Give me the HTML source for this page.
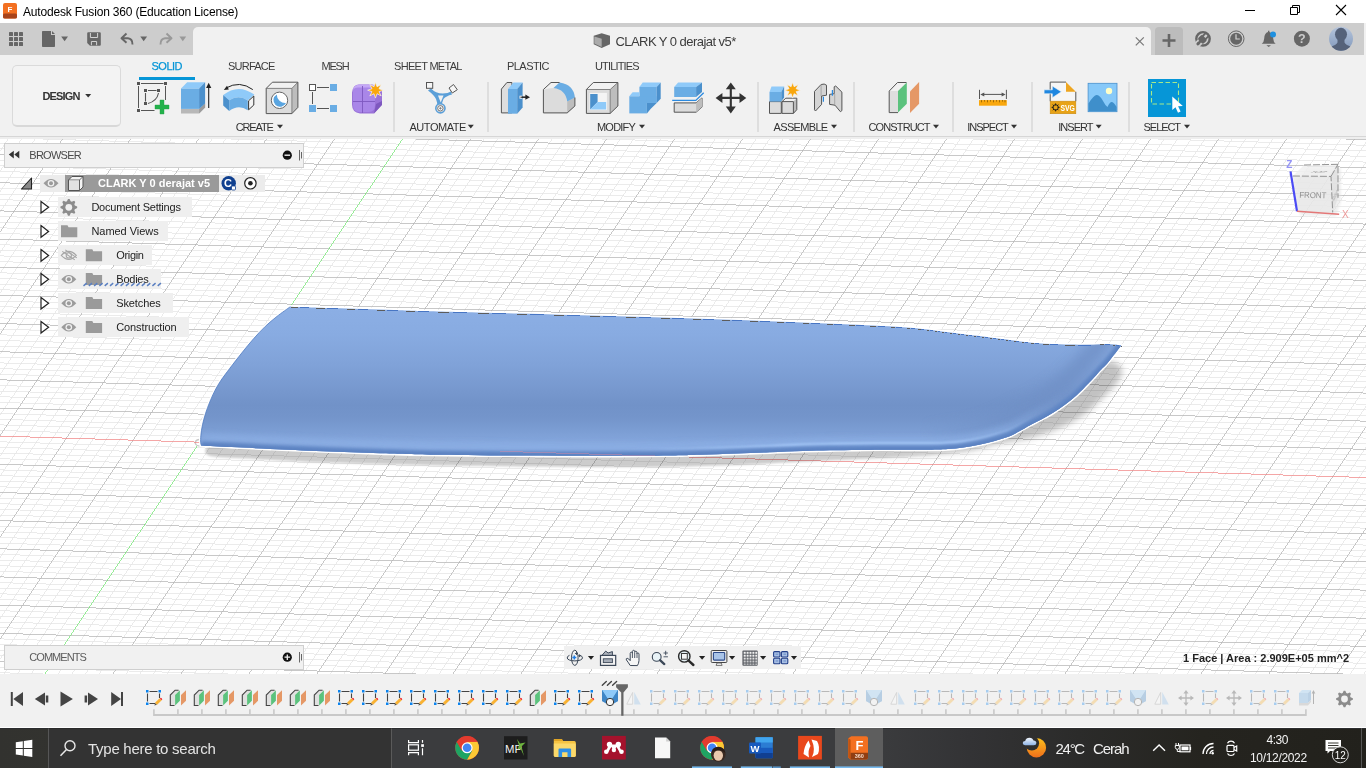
<!DOCTYPE html>
<html lang="en"><head><meta charset="utf-8"><title>Autodesk Fusion 360 (Education License)</title>
<style>
*{box-sizing:border-box;margin:0;padding:0}
html,body{width:1366px;height:768px;overflow:hidden;background:#fff;font-family:"Liberation Sans",sans-serif}
#app{position:relative;width:1366px;height:768px;overflow:hidden;background:#fff}
.t{position:absolute;white-space:nowrap;display:block}
.abs{position:absolute}
svg{position:absolute;overflow:visible}
#titlebar{position:absolute;left:0;top:0;width:1366px;height:23px;background:#fff}
#qat{position:absolute;left:0;top:23px;width:1364px;height:32px;background:#cdcdcd}
#qatr{position:absolute;left:1364px;top:23px;width:2px;height:32px;background:#f1f1f1}
#doctab{position:absolute;left:193px;top:27px;width:958px;height:29px;background:#f1f1f1;border-radius:5px 5px 0 0}
#newtab{position:absolute;left:1155px;top:27px;width:28px;height:28px;background:#bcbcbc;border-radius:4px 4px 0 0}
#ribbon{position:absolute;left:0;top:55px;width:1366px;height:83.5px;background:linear-gradient(#f1f1f1 0,#f1f1f1 80.8px,#d6d6d6 80.8px,#d6d6d6 82px,#eeeeee 82px,#eeeeee 83.5px)}
#design{position:absolute;left:12px;top:65px;width:109px;height:61.5px;border:1px solid #dadada;border-bottom:2px solid #d8d8d8;border-radius:5px;background:#f3f3f3}
.sep{position:absolute;top:82px;width:2px;height:50px;background:#dedede}
#canvas{position:absolute;left:0;top:137px;width:1366px;height:537px;background:#fff;overflow:hidden}
#timeline{position:absolute;left:0;top:674px;width:1366px;height:54px;background:#f1f1f1;border-bottom:1.2px solid #fff}
#taskbar{position:absolute;left:0;top:728px;width:1366px;height:40px;background:linear-gradient(90deg,#32322f 0%,#33332f 4%,#3b3c3e 28%,#3b3c3e 64%,#333335 71%,#2b2b2a 79%,#25241f 88%,#22211c 100%);border-top:1px solid #2c2d2f}

</style></head>
<body>
<div id="app">
<div id="titlebar"></div>
<div id="qat"></div><div id="qatr"></div>
<div id="doctab"></div><div id="newtab"></div>
<div id="ribbon"></div>
<span class="t" style="left:23.0px;top:4.34px;font-size:12px;line-height:17px;letter-spacing:-0.183px;color:#000;">Autodesk Fusion 360 (Education License)</span>
<span class="t" style="left:615.4px;top:32.50px;font-size:13px;line-height:18px;letter-spacing:-0.546px;color:#3c3c3c;">CLARK Y 0 derajat v5*</span>
<span class="t" style="left:151.5px;top:58.69px;font-size:11px;line-height:15px;letter-spacing:-0.502px;color:#0696d7;-webkit-text-stroke:0.25px #0696d7;">SOLID</span>
<span class="t" style="left:228.0px;top:58.69px;font-size:11px;line-height:15px;letter-spacing:-0.780px;color:#3c3c3c;">SURFACE</span>
<span class="t" style="left:321.5px;top:58.69px;font-size:11px;line-height:15px;letter-spacing:-1.196px;color:#3c3c3c;">MESH</span>
<span class="t" style="left:394.0px;top:58.69px;font-size:11px;line-height:15px;letter-spacing:-0.690px;color:#3c3c3c;">SHEET METAL</span>
<span class="t" style="left:507.0px;top:58.69px;font-size:11px;line-height:15px;letter-spacing:-0.550px;color:#3c3c3c;">PLASTIC</span>
<span class="t" style="left:595.0px;top:58.69px;font-size:11px;line-height:15px;letter-spacing:-0.838px;color:#3c3c3c;">UTILITIES</span>
<div class="abs" style="left:139px;top:76.5px;width:56px;height:3px;background:#0696d7"></div>
<div id="design"></div>
<span class="t" style="left:42.5px;top:88.69px;font-size:11px;line-height:15px;letter-spacing:-0.862px;font-weight:bold;color:#333;">DESIGN</span>
<span class="t" style="left:235.7px;top:119.69px;font-size:11px;line-height:15px;letter-spacing:-1.134px;color:#333;">CREATE</span>
<span class="t" style="left:409.5px;top:119.69px;font-size:11px;line-height:15px;letter-spacing:-0.462px;color:#333;">AUTOMATE</span>
<span class="t" style="left:597.0px;top:119.69px;font-size:11px;line-height:15px;letter-spacing:-0.796px;color:#333;">MODIFY</span>
<span class="t" style="left:773.6px;top:119.69px;font-size:11px;line-height:15px;letter-spacing:-0.676px;color:#333;">ASSEMBLE</span>
<span class="t" style="left:868.5px;top:119.69px;font-size:11px;line-height:15px;letter-spacing:-0.872px;color:#333;">CONSTRUCT</span>
<span class="t" style="left:967.3px;top:119.69px;font-size:11px;line-height:15px;letter-spacing:-1.025px;color:#333;">INSPECT</span>
<span class="t" style="left:1058.2px;top:119.69px;font-size:11px;line-height:15px;letter-spacing:-0.957px;color:#333;">INSERT</span>
<span class="t" style="left:1143.6px;top:119.69px;font-size:11px;line-height:15px;letter-spacing:-1.066px;color:#333;">SELECT</span>
<div class="sep" style="left:393px"></div>
<div class="sep" style="left:487px"></div>
<div class="sep" style="left:757px"></div>
<div class="sep" style="left:853px"></div>
<div class="sep" style="left:952px"></div>
<div class="sep" style="left:1031px"></div>
<div class="sep" style="left:1128px"></div>
<svg width="1366" height="137" viewBox="0 0 1366 137" style="left:0;top:0">
<path d="M85.2 93.9h6l-3 3.6z" fill="#333"/>
<path d="M277.0 124.8h6l-3 3.6z" fill="#333"/>
<path d="M467.8 124.8h6l-3 3.6z" fill="#333"/>
<path d="M639.0 124.8h6l-3 3.6z" fill="#333"/>
<path d="M831.0 124.8h6l-3 3.6z" fill="#333"/>
<path d="M933.0 124.8h6l-3 3.6z" fill="#333"/>
<path d="M1011.0 124.8h6l-3 3.6z" fill="#333"/>
<path d="M1095.7 124.8h6l-3 3.6z" fill="#333"/>
<path d="M1184.0 124.8h6l-3 3.6z" fill="#333"/>
<!-- app icon -->
<g transform="translate(3,3)">
 <rect x="0" y="0" width="14" height="15.500" rx="2" fill="#f37021"/>
 <rect x="0" y="10.500" width="14" height="5" rx="1.500" fill="#a8431a"/>
 <text x="7" y="8.500" font-family="Liberation Sans, sans-serif" font-weight="bold" font-size="8" fill="#fff" text-anchor="middle">F</text>
</g>
<!-- window controls -->
<path d="M1245 10.5h10" stroke="#000" stroke-width="1" fill="none"/>
<path d="M1290.5 7.5h7v7h-7z M1292.500 7.500v-2h7v7h-2" stroke="#000" stroke-width="1" fill="none"/>
<path d="M1336 5l10 10M1346 5l-10 10" stroke="#000" stroke-width="1.1" fill="none"/>
<!-- QAT icons -->
<g fill="#666">
 <g id="gridic">
  <rect x="9" y="32" width="4" height="4" rx=".6"/><rect x="14" y="32" width="4" height="4" rx=".6"/><rect x="19" y="32" width="4" height="4" rx=".6"/>
  <rect x="9" y="37" width="4" height="4" rx=".6"/><rect x="14" y="37" width="4" height="4" rx=".6"/><rect x="19" y="37" width="4" height="4" rx=".6"/>
  <rect x="9" y="42" width="4" height="4" rx=".6"/><rect x="14" y="42" width="4" height="4" rx=".6"/><rect x="19" y="42" width="4" height="4" rx=".6"/>
 </g>
 <path d="M43 31h8v4h4v11.200q0 .8 -.8 .8h-11.400q-.8 0 -.8 -.8v-14.400q0 -.8 .8 -.8z M52 31l3 3h-3z"/>
 <path d="M61.200 36.500h6.800l-3.400 4.800z"/>
 <path d="M88.200 32.200h11.600q1 0 1 1v11.600q0 1 -1 1h-9.800l-2.800 -2.800v-9.800q0 -1 1 -1z"/>
 <path d="M90.400 33v4.500h7.200v-4.500M91.400 45.200v-3.700h5.200v3.700" stroke="#d2d2d2" fill="none" stroke-width="1"/>
 <path d="M140.300 36.500h6.800l-3.400 4.800z"/>
</g>
<path d="M126.500 33.500l-5 4.800l5 4.500 M121.500 38.300h6.500q4.500 .4 4.500 6.200" stroke="#666" stroke-width="1.9" fill="none" stroke-linejoin="round"/>
<path d="M166.500 33.500l5 4.800l-5 4.500 M171.500 38.300h-6.500q-4.500 .4 -4.500 6.200" stroke="#999" stroke-width="1.9" fill="none" stroke-linejoin="round"/>
<path d="M179.400 36.500h6.800l-3.400 4.800z" fill="#999"/>
<!-- doc tab icon + close -->
<g transform="translate(593.700,33.200)">
 <path d="M0 2.500l8 -2.500l8.300 2.500v8.500l-8.300 3.800l-8 -3.800z" fill="#666"/>
 <path d="M0.600 3.200l7.400 2.300v8.300l-7.400 -3.400z" fill="#aaa"/>
</g>
<path d="M1135.800 37.300l8 8M1143.800 37.300l-8 8" stroke="#777" stroke-width="1.2"/>
<path d="M1162.500 40.500h13M1169 34v13" stroke="#666" stroke-width="2.600"/>
<!-- right QAT icons -->
<g>
 <circle cx="1203" cy="38.800" r="6.700" fill="none" stroke="#666" stroke-width="2.400"/>
 <g transform="translate(1203,38.800) rotate(45)">
  <path d="M-2.300 4.500v6.500M2.300 4.500v6.500" stroke="#cdcdcd" stroke-width="1.700" fill="none"/>
  <rect x="-3.900" y="-2.300" width="7.800" height="6.300" rx="1.800" fill="#666"/>
  <rect x="-3" y="-6.500" width="1.800" height="5" fill="#666"/><rect x="1.200" y="-6.500" width="1.800" height="5" fill="#666"/>
  <rect x="-1.200" y="3" width="2.400" height="5.500" fill="#666"/>
 </g>
 <circle cx="1236.200" cy="38.700" r="7.800" fill="none" stroke="#666" stroke-width="1"/>
 <circle cx="1236.200" cy="38.700" r="6" fill="#666"/>
 <path d="M1236 34.300v4.700h3.800" stroke="#d4d4d4" stroke-width="1.200" fill="none"/>
 <path d="M1268 30.800h1.400v1.200q3.600 1 3.800 6.500q.2 3.500 2.400 5.300h-13.800q2.200 -1.800 2.400 -5.300q.2 -5.500 3.800 -6.500z M1266.400 45.300h4.600l-2.300 1.700z" fill="#666"/>
 <circle cx="1273" cy="34.600" r="3" fill="#1e90e0"/>
 <circle cx="1301.900" cy="38.700" r="8" fill="#666"/>
 <text x="1301.900" y="43.300" font-family="Liberation Sans, sans-serif" font-weight="bold" font-size="12.500" fill="#cdcdcd" text-anchor="middle">?</text>
 <defs><linearGradient id="avg" x1="0" y1="0" x2="0" y2="1"><stop offset="0" stop-color="#b6c5dc"/><stop offset="1" stop-color="#8198bb"/></linearGradient>
 <clipPath id="avc"><circle cx="1341" cy="38.700" r="12"/></clipPath></defs>
 <circle cx="1341" cy="38.700" r="12" fill="url(#avg)"/>
 <g clip-path="url(#avc)" fill="#55627a"><ellipse cx="1341" cy="34.300" rx="6" ry="6.500"/><path d="M1337.500 38h7v4.500q1 2.500 8 4.500v6h-23v-6q7 -2 8 -4.500z"/></g>
</g>

<!-- CREATE: sketch -->
<g stroke="#555" stroke-width="1" fill="none">
 <path d="M141 83.500h22.500M138.500 86v22M165.500 86v14M141 110.500h13.500"/>
 <path d="M148 90.500h8.500M145.500 93v8.500M158.500 93q-1.500 8 -10.500 10.500" stroke-width="1.100"/>
</g>
<g fill="#555">
 <rect x="137" y="82" width="3" height="3"/><rect x="164" y="82" width="3" height="3"/><rect x="137" y="109" width="3" height="3"/>
 <rect x="144" y="89" width="3" height="3"/><rect x="157" y="89" width="3" height="3"/><rect x="144" y="102" width="3" height="3"/>
</g>
<path d="M160 100h4v5h5v4h-5v5h-4v-5h-5v-4h5z" fill="#23b24b" stroke="#1f9c43" stroke-width=".4"/>
<!-- CREATE: extrude -->
<path d="M181 108.900h18.100l6 -5.300v3.800l-6 6.200h-18.100z" fill="#b8b8b8"/>
<path d="M199.100 108.900l6 -5.300v3.800l-6 6.200z" fill="#9c9c9c"/>
<path d="M181 88.400h18.100v20.500h-18.100z" fill="#6aade4"/>
<path d="M181 88.400l6.200 -6.200h17.900l-6 6.200z" fill="#8fcaf9"/>
<path d="M199.100 88.400l6 -6.200v21.400l-6 5.300z" fill="#4b90cc"/>
<path d="M208.700 108v-22" stroke="#222" stroke-width="1.100"/><path d="M208.700 82.800l2.600 5.200h-5.200z" fill="#222"/>
<!-- CREATE: revolve -->
<path d="M252.800 89.600q-13 -9.500 -27 -1.500" stroke="#222" stroke-width="1" fill="none"/>
<path d="M223.800 90l3.200 -4.200l1.800 3.600z" fill="#222"/>
<path d="M223.200 95q15 -12 31.200 -.4l-6.600 6q-9 -6.500 -18.600 -.3z" fill="#8fcaf9"/>
<path d="M229.200 100.300q9.600 -6.200 18.600 .3v9.700q-9 -6.500 -18.600 .6z" fill="#6aade4"/>
<path d="M223.200 95l6 5.300v10.600l-6 -5.500z" fill="#4b90cc"/>
<path d="M248.600 100.800l5.200 -4.800v9l-5.200 4.800z" fill="#f4f4f4" stroke="#333" stroke-width="1"/>
<!-- CREATE: hole -->
<path d="M266.200 88.400l6.200 -6.200h25.500l-6 6.200z" fill="#f1f1f1"/>
<path d="M291.900 88.400l6 -6.200v25.200l-6 6.200z" fill="#bdbdbd"/>
<path d="M266.200 88.400h25.700v25.200h-25.700z" fill="#dcdcdc"/>
<path d="M266.200 88.400h25.700v25.200 M291.900 88.400l6 -6.200" fill="none" stroke="#777" stroke-width=".9"/><path d="M266.200 88.400l6.200 -6.200h25.500v25.200l-6 6.200h-25.700z" fill="none" stroke="#555" stroke-width="1"/>
<circle cx="279.500" cy="100.300" r="8.200" fill="#fff" stroke="#666" stroke-width="1"/>
<path d="M276.800 94.400a6.600 6.600 0 1 0 9.200 8.600a8.500 8.500 0 0 1 -9.200 -8.600z" fill="#5aa5e0"/>
<!-- CREATE: pattern -->
<path d="M317 87.500h12M312.500 92v12M317 108.500h12" stroke="#555" stroke-width="1" fill="none"/>
<rect x="309.500" y="84.500" width="6" height="6" fill="#fff" stroke="#555" stroke-width="1"/>
<rect x="330" y="84" width="7" height="7" fill="#6aade4"/><rect x="309" y="105" width="7" height="7" fill="#6aade4"/><rect x="330" y="105" width="7" height="7" fill="#6aade4"/>
<!-- CREATE: form -->
<path d="M359 84.500h12q5 0 5 4l6 2v14l-8 9h-14q-8 -1 -8 -9v-12q1 -8 7 -8z" fill="#9a73d8"/>
<path d="M353 92q0 -6 6 -6h11q5 0 5 5v14q0 7 -6 7h-10q-6 0 -6 -7z" fill="#a986e8"/>
<path d="M359 84.500h12q4 0 5 3l-3 2q-1 -2 -4 -2h-11q-4 0 -5 3q0 -5 6 -6z" fill="#c5a8f6"/>
<path d="M376 104l6 -3v4l-8 8.500z" fill="#7e58bf"/>
<path d="M362.500 86v27M353 101.500h22" stroke="#7e58bf" stroke-width=".9" fill="none"/>
<path d="M375.500 82.300l1.500 4.400l4.200 -2.200l-2.200 4.200l4.400 1.500l-4.400 1.500l2.200 4.200l-4.200 -2.200l-1.500 4.400l-1.500 -4.400l-4.200 2.200l2.200 -4.200l-4.400 -1.500l4.400 -1.500l-2.200 -4.200l4.200 2.200z" fill="#f9a70d" stroke="#f4f4f4" stroke-width=".7"/>
<!-- AUTOMATE -->
<path d="M431 88.500q6 6.500 16.500 4.500l3.500 -1.500l1 3q-6 1.500 -8.500 4.500q-2 3.500 -1 7l-5.500 .5q.8 -3.500 -1 -7.500q-2 -4 -8 -8.500z" fill="#5b9fd8"/>
<path d="M438 95.500h5.500l-2.800 7z" fill="#f1f1f1"/>
<rect x="426.500" y="82.500" width="6.200" height="5.800" fill="#f6f6f6" stroke="#555" stroke-width="1"/>
<path d="M449 88l4.500 -3.500l3.800 5.200l-5 3.300z" fill="#f6f6f6" stroke="#555" stroke-width="1"/>
<circle cx="440.400" cy="108.300" r="4.600" fill="#e6e6e6" stroke="#5b9fd8" stroke-width="1.600"/>
<circle cx="440.400" cy="108.300" r="2.700" fill="#fff" stroke="#666" stroke-width=".9"/>
<path d="M439 108.300h2.800M440.400 106.900v2.800" stroke="#666" stroke-width=".7"/>
<!-- MODIFY: press pull -->
<path d="M501.400 89.100l5.500 -6.600h5v30.400h-10.500z" fill="#dedede" stroke="#555" stroke-width="1"/>
<path d="M508 89h9.200v24.700h-9.200z" fill="#6aade4"/>
<path d="M508 89l5.400 -6.500h9.200l-5.400 6.500z" fill="#8fcaf9"/>
<path d="M517.200 89l5.400 -6.500v25l-5.400 6.200z" fill="#4b90cc"/>
<path d="M520 97.200h6" stroke="#222" stroke-width="1.100"/><path d="M530 97.200l-4.600 -2.600v5.200z" fill="#222"/>
<rect x="519.500" y="95.700" width="2.500" height="3" fill="#f1f1f1"/><path d="M520.500 97.200h6" stroke="#222" stroke-width="1.100"/>
<!-- MODIFY: fillet -->
<path d="M543.400 112.900v-23.400l7.600 -7h8.500q14 2 15.400 15v8.500l-7.700 6.900z" fill="#dcdcdc"/>
<path d="M567.200 112.900v-11.500l7.700 -4v8.600z" fill="#bdbdbd"/>
<path d="M543.400 89.500l7.600 -7h8.500l-6 5.500q-5 0 -10.100 1.500z" fill="#f1f1f1"/>
<path d="M559.500 82.500q14 2 15.400 15l-7.700 4q-1.500 -12 -13.700 -13.500z" fill="#6aade4"/>
<path d="M543.400 112.900v-23.400l7.600 -7h8.500 M574.900 97.500v8.500l-7.700 6.900h-23.800" fill="none" stroke="#555" stroke-width="1"/>
<!-- MODIFY: shell -->
<path d="M586.400 89.500l6.900 -7h24.600l-7.700 7z" fill="#f1f1f1"/>
<path d="M610.200 89.500l7.700 -7v23.500l-7.700 7.400z" fill="#bdbdbd"/>
<path d="M586.400 89.500h23.800v23.900h-23.800z" fill="#dcdcdc"/>
<path d="M586.400 89.500h23.800v23.900 M610.200 89.500l7.700 -7" fill="none" stroke="#777" stroke-width=".9"/><path d="M586.400 89.500l6.900 -7h24.600v23.500l-7.700 7.400h-23.800z" fill="none" stroke="#555" stroke-width="1"/>
<rect x="589.500" y="92.900" width="17.400" height="17.200" fill="#f4f4f4"/>
<path d="M590.200 94.100h7.400v8l-7.400 7.400z" fill="#4b90cc"/>
<path d="M597.600 102.100h8.500v7.400h-15.900z" fill="#8fcaf9"/>
<!-- MODIFY: combine -->
<path d="M639.400 86.900h17.300v16h-17.300z" fill="#6aade4"/>
<path d="M639.400 86.900l3.300 -4.500h18l-4 4.500z" fill="#8fcaf9"/>
<path d="M656.700 86.900l4 -4.500v16.300l-4 4.200z" fill="#4b90cc"/>
<path d="M629.300 96.200h17.600v17.200h-17.600z" fill="#6aade4"/>
<path d="M629.300 96.200l3.300 -3.900h6.800v3.900z" fill="#8fcaf9"/>
<path d="M646.900 102.900h9.800l-5.900 5.900l-3.900 4.600z" fill="#4b90cc"/>
<path d="M646.900 96.200h9.800v6.700h-9.800z" fill="#6aade4"/>
<!-- MODIFY: split -->
<path d="M674.200 102.900h21.900l5.900 -5v9.200l-5.900 5.100h-21.900z" fill="#dcdcdc" stroke="#555" stroke-width="1"/>
<path d="M696.100 102.900l5.900 -5v9.200l-5.900 5.100z" fill="#bdbdbd"/>
<path d="M674.200 86.900h21.900v10.100h-21.900z" fill="#6aade4"/>
<path d="M674.200 86.900l3.900 -4.500h23.900l-5.900 4.500z" fill="#8fcaf9"/>
<path d="M696.100 86.900l5.900 -4.500v9.600l-5.900 5z" fill="#4b90cc"/>
<path d="M672.200 100.400h23.600l7.900 -7.600" fill="none" stroke="#2b8ae0" stroke-width="1.300"/>
<!-- MODIFY: move -->
<path d="M730.800 87v22M720 97.900h22" stroke="#333" stroke-width="2.100"/>
<path d="M730.800 82.400l5 6.800h-10z M730.800 113.400l5 -6.800h-10z M715.600 97.900l6.800 -5v10z M746.300 97.900l-6.800 -5v10z" fill="#333"/>
<!-- ASSEMBLE: new component -->
<path d="M769.500 101.600h11.800v11.800h-11.800z" fill="#dcdcdc" stroke="#555" stroke-width="1"/>
<path d="M782 101.600h11.400v11.800h-11.400z" fill="#dcdcdc"/>
<path d="M782 101.600l3.800 -3.400h11l-3.400 3.400z" fill="#f1f1f1"/>
<path d="M793.400 101.600l3.400 -3.400v11.500l-3.400 3.700z" fill="#bdbdbd"/>
<path d="M782 101.600l3.800 -3.400h11v11.500l-3.400 3.700h-11.400z M782 101.600h11.400v11.800" fill="none" stroke="#555" stroke-width="1"/>
<path d="M769.500 92h11.800v9.600h-11.800z" fill="#6aade4"/>
<path d="M769.500 92l2 -5.600h12.600l-2.800 5.600z" fill="#8fcaf9"/>
<path d="M781.300 92l2.800 -5.600v11l-2.800 4.200z" fill="#4b90cc"/>
<path d="M792.600 82.300l1.500 4.400l4.200 -2.200l-2.200 4.200l4.400 1.500l-4.400 1.500l2.200 4.200l-4.200 -2.200l-1.500 4.400l-1.500 -4.400l-4.200 2.200l2.200 -4.200l-4.400 -1.500l4.400 -1.500l-2.200 -4.200l4.200 2.200z" fill="#f9a70d" stroke="#f4f4f4" stroke-width=".7"/>
<!-- ASSEMBLE: joint -->
<path d="M814.500 91.400l6.600 -6.900q3.500 -1.200 5.400 .7v10l-4.900 .8v8.400l-6.100 6.600l-1 -1.200z" fill="#d4d4d4" stroke="#555" stroke-width="1" stroke-linejoin="round"/>
<path d="M821.100 84.500v11.500" stroke="#9a9a9a" stroke-width=".8"/>
<path d="M834.200 86.800l1.500 -.8l6.200 6.100v18.500l-1.500 1.100l-5.400 -6.500l-5.400 -.8v-10l4.600 -.7z" fill="#d4d4d4" stroke="#555" stroke-width="1" stroke-linejoin="round"/>
<path d="M834.700 94v11" stroke="#9a9a9a" stroke-width=".8"/>
<path d="M823.400 96.800v5M832.400 90.100v5.600" stroke="#2b8ae0" stroke-width="1.200"/>
<!-- CONSTRUCT -->
<path d="M889.200 112.600v-21.500l8.300 -8.600h9l-8.500 8.600v21.500z" fill="#dedede"/>
<path d="M889.200 91.100l8.300 -8.600h9l-8.500 8.600z" fill="#f1f1f1"/>
<path d="M898 112.600h-8.800v-21.500l8.300 -8.600h9" fill="none" stroke="#555" stroke-width="1"/>
<path d="M898 91.100l8.800 -8.600v21.200l-8.800 8.900z" fill="#5bc27d"/>
<path d="M910 91.400l9.100 -9.300v21.600l-9.100 9.200z" fill="#e59866"/>
<!-- INSPECT -->
<rect x="979" y="100.100" width="27.800" height="5.600" fill="#f9a70d"/>
<path d="M981.500 100.100v2.200M984.500 100.100v1.500M987.500 100.100v2.200M990.500 100.100v1.500M993.500 100.100v2.200M996.500 100.100v1.500M999.500 100.100v2.200M1002.500 100.100v1.500M1005 100.100v2.200" stroke="#8a5a00" stroke-width=".8"/>
<path d="M979.500 89.800v9.200M1006.400 89.800v9.200M982 94.400h22" stroke="#555" stroke-width="1"/>
<path d="M980.300 94.400l4 -2v4z M1005.600 94.400l-4 -2v4z" fill="#555"/>
<!-- INSERT: svg -->
<path d="M1050.200 101.200v-19.100h15.800l9.800 9.700v9.400z" fill="#f6f6f6"/>
<path d="M1050.200 101.200v-19.100h15.800 M1075.800 91.800v9.400" fill="none" stroke="#555" stroke-width="1"/>
<path d="M1066 82.100l9.800 9.700h-9.800z" fill="#eea621"/>
<path d="M1044.100 89.800h8.200v-3.800l9.100 5.800l-9.100 5.900v-3.900h-8.200z" fill="#1f87e0" stroke="#f6f6f6" stroke-width=".6"/>
<rect x="1050.200" y="101.200" width="25.600" height="12.500" fill="#e8a317" stroke="#c98a10" stroke-width=".6"/>
<circle cx="1055.600" cy="107.400" r="2.700" fill="none" stroke="#1a1a1a" stroke-width="1"/>
<path d="M1055.600 103.400v8M1051.600 107.400h8M1052.800 104.600l5.600 5.600M1058.400 104.600l-5.600 5.600" stroke="#1a1a1a" stroke-width=".9"/>
<circle cx="1055.600" cy="107.400" r="1.900" fill="#e8a317"/>
<text x="1067.700" y="110.600" font-family="Liberation Sans, sans-serif" font-weight="bold" font-size="8.500" fill="#fff" text-anchor="middle" textLength="14.500" lengthAdjust="spacingAndGlyphs">SVG</text>
<!-- INSERT: image -->
<rect x="1088.100" y="83.300" width="28.900" height="28.400" fill="#87c9f9" stroke="#4b90cc" stroke-width=".8"/>
<path d="M1088.500 103.500Q1094 94.500 1097 95Q1100 95.500 1103 101Q1105 105 1107.500 107Q1110 101.500 1112 102Q1114 102.500 1116.600 107L1116.600 111.300L1088.500 111.300Z" fill="#3f8fcb"/>
<circle cx="1109" cy="91" r="3.200" fill="#ffffc8"/>
<!-- SELECT -->
<rect x="1148" y="79" width="38" height="38" fill="#0696d7"/>
<rect x="1151.500" y="82.500" width="27" height="21.500" fill="none" stroke="#a6e98a" stroke-width="1.100" stroke-dasharray="4.500 2.500"/>
<path d="M1172.300 96.500v13.500l3.200 -2.800l2.500 5.500l2.600 -1.200l-2.500 -5.300l4.700 -.1z" fill="#fff"/>

</svg>
<div id="canvas">
<svg width="1366" height="537" viewBox="0 137 1366 537" style="left:0;top:0">
<defs>
<linearGradient id="bodyg" gradientUnits="userSpaceOnUse" x1="0" y1="306" x2="0" y2="456">
<stop offset="0.000" stop-color="#8cafe5"/>
<stop offset="0.193" stop-color="#88abe1"/>
<stop offset="0.393" stop-color="#80a2d8"/>
<stop offset="0.560" stop-color="#7798ce"/>
<stop offset="0.660" stop-color="#7192c8"/>
<stop offset="0.747" stop-color="#7495cb"/>
<stop offset="0.827" stop-color="#7b9dd3"/>
<stop offset="0.907" stop-color="#84a6dc"/>
<stop offset="1.000" stop-color="#89ace2"/>
</linearGradient>
<clipPath id="bodyc"><path d="M290.3 306.7C298.6 307.0 321.7 307.7 340.0 308.3C358.3 308.9 385.0 309.8 400.0 310.3C415.0 310.8 410.0 310.8 430.0 311.3C450.0 311.9 491.7 312.9 520.0 313.6C548.3 314.4 575.0 315.1 600.0 315.8C625.0 316.5 648.3 317.1 670.0 317.8C691.7 318.5 710.1 319.1 730.0 319.8C749.9 320.5 769.5 321.2 789.5 322.0C809.5 322.8 829.9 323.6 850.0 324.6C870.1 325.6 892.6 326.4 910.0 327.8C927.4 329.2 939.5 331.3 954.3 333.1C969.1 334.9 986.8 337.1 998.6 338.6C1010.4 340.1 1016.1 341.0 1025.0 341.9C1033.8 342.8 1041.4 343.6 1051.7 344.1C1062.0 344.6 1077.5 344.8 1087.0 344.8C1096.5 344.8 1103.3 344.2 1109.0 344.3C1114.7 344.4 1119.2 345.3 1121.3 345.5C1119.2 348.2 1111.8 357.8 1108.4 361.9C1105.0 366.0 1103.0 367.5 1100.7 370.0C1098.4 372.5 1096.7 374.6 1094.7 376.8C1092.7 379.0 1091.6 380.3 1088.6 383.3C1085.6 386.3 1080.8 391.5 1076.9 395.0C1073.0 398.5 1069.1 401.5 1065.2 404.4C1061.3 407.3 1057.3 410.1 1053.4 412.6C1049.5 415.1 1045.6 417.1 1041.7 419.2C1037.8 421.3 1033.5 423.3 1030.0 425.2C1026.5 427.1 1024.0 428.6 1020.7 430.4C1017.4 432.2 1014.6 434.1 1010.3 435.9C1006.0 437.6 999.9 439.4 994.7 440.9C989.5 442.4 984.3 443.7 979.1 444.8C973.9 445.9 968.6 446.9 963.4 447.6C958.2 448.3 953.0 448.8 947.8 449.1C942.6 449.5 940.0 449.6 932.0 449.7C924.0 449.8 912.0 449.7 900.0 449.7C888.0 449.7 871.7 449.8 860.0 449.9C848.3 450.0 839.5 450.1 830.0 450.3C820.5 450.5 812.8 450.7 802.8 451.0C792.8 451.3 781.1 451.9 770.0 452.3C758.9 452.7 748.1 453.2 736.4 453.6C724.7 454.0 711.1 454.5 700.0 454.8C688.9 455.1 686.7 455.3 670.0 455.5C653.3 455.7 625.0 455.8 600.0 455.8C575.0 455.8 548.3 455.8 520.0 455.6C491.7 455.4 453.3 455.1 430.0 454.7C406.7 454.3 397.9 453.9 380.0 453.3C362.1 452.7 341.1 451.9 322.8 451.2C304.5 450.5 285.2 449.5 270.0 448.9C254.8 448.2 243.1 447.6 231.7 447.1C220.3 446.6 206.5 445.9 201.5 445.7C201.4 445.2 200.8 444.2 200.7 442.5C200.6 440.8 200.6 438.1 200.9 435.2C201.2 432.2 201.7 428.4 202.5 424.8C203.3 421.2 204.4 417.1 205.6 413.3C206.8 409.5 208.2 405.7 209.8 401.9C211.4 398.1 213.1 394.0 215.0 390.4C216.9 386.8 218.8 383.6 221.2 380.0C223.7 376.4 226.2 373.1 229.6 368.6C233.0 364.1 237.9 357.8 241.9 352.8C245.9 347.8 249.7 343.1 253.6 338.7C257.5 334.3 261.4 330.1 265.3 326.4C269.2 322.7 272.8 319.7 277.0 316.4C281.2 313.1 288.1 308.3 290.3 306.7Z"/></clipPath>
<filter id="b1" x="-10%" y="-30%" width="120%" height="160%"><feGaussianBlur stdDeviation="1.300"/></filter>
<filter id="b6" x="-10%" y="-30%" width="120%" height="160%"><feGaussianBlur stdDeviation="6"/></filter>
<filter id="b3" x="-10%" y="-30%" width="120%" height="160%"><feGaussianBlur stdDeviation="3"/></filter>
<linearGradient id="fadeR" gradientUnits="userSpaceOnUse" x1="840" y1="0" x2="990" y2="0"><stop offset="0" stop-color="#000"/><stop offset="1" stop-color="#fff"/></linearGradient>
<linearGradient id="fadeL" gradientUnits="userSpaceOnUse" x1="880" y1="0" x2="1010" y2="0"><stop offset="0" stop-color="#fff"/><stop offset="1" stop-color="#000"/></linearGradient>
<linearGradient id="fadeL2" gradientUnits="userSpaceOnUse" x1="990" y1="0" x2="1070" y2="0"><stop offset="0" stop-color="#fff"/><stop offset="1" stop-color="#000"/></linearGradient>
<mask id="mL2" maskUnits="userSpaceOnUse" x="0" y="137" width="1366" height="537"><rect x="0" y="137" width="1366" height="537" fill="url(#fadeL2)"/></mask>
<linearGradient id="fadeH" gradientUnits="userSpaceOnUse" x1="620" y1="0" x2="1040" y2="0"><stop offset="0" stop-color="#000"/><stop offset=".4" stop-color="#fff"/><stop offset=".8" stop-color="#fff"/><stop offset="1" stop-color="#000"/></linearGradient>
<mask id="mH" maskUnits="userSpaceOnUse" x="0" y="137" width="1366" height="537"><rect x="0" y="137" width="1366" height="537" fill="url(#fadeH)"/></mask>
<linearGradient id="fadeR2" gradientUnits="userSpaceOnUse" x1="920" y1="0" x2="1040" y2="0"><stop offset="0" stop-color="#000"/><stop offset="1" stop-color="#fff"/></linearGradient>
<mask id="mR2" maskUnits="userSpaceOnUse" x="0" y="137" width="1366" height="537"><rect x="0" y="137" width="1366" height="537" fill="url(#fadeR2)"/></mask>
<filter id="b08" x="-10%" y="-30%" width="120%" height="160%"><feGaussianBlur stdDeviation=".800"/></filter>
<filter id="b15" x="-10%" y="-30%" width="120%" height="160%"><feGaussianBlur stdDeviation="1.600"/></filter>
<mask id="mR" maskUnits="userSpaceOnUse" x="0" y="137" width="1366" height="537"><rect x="0" y="137" width="1366" height="537" fill="url(#fadeR)"/></mask>
<mask id="mL" maskUnits="userSpaceOnUse" x="0" y="137" width="1366" height="537"><rect x="0" y="137" width="1366" height="537" fill="url(#fadeL)"/></mask>
<filter id="b4" x="-10%" y="-30%" width="120%" height="160%"><feGaussianBlur stdDeviation="3.200"/></filter>
</defs>

<!-- origin marker --><path d="M199.500 439.400a4.200 3.300 0 1 0 0 6.600" fill="none" stroke="#c8c8c8" stroke-width="1.500"/>
<g shape-rendering="crispEdges" fill="none" stroke-width=".700">
<path stroke="#e3e3e3" d="M9.4 137L-349.7 674M23.0 137L-336.1 674M36.6 137L-322.5 674M50.2 137L-308.9 674M77.4 137L-281.7 674M91.0 137L-268.1 674M104.6 137L-254.5 674M118.2 137L-240.9 674M145.4 137L-213.7 674M159.0 137L-200.1 674M172.6 137L-186.5 674M186.2 137L-172.9 674M213.4 137L-145.7 674M227.0 137L-132.1 674M240.6 137L-118.5 674M254.2 137L-104.9 674M281.4 137L-77.7 674M295.0 137L-64.1 674M308.6 137L-50.5 674M322.2 137L-36.9 674M349.4 137L-9.7 674M363.0 137L3.9 674M376.6 137L17.5 674M390.2 137L31.1 674M417.4 137L58.3 674M431.0 137L71.9 674M444.6 137L85.5 674M458.2 137L99.1 674M485.4 137L126.3 674M499.0 137L139.9 674M512.6 137L153.5 674M526.2 137L167.1 674M553.4 137L194.3 674M567.0 137L207.9 674M580.6 137L221.5 674M594.2 137L235.1 674M621.4 137L262.3 674M635.0 137L275.9 674M648.6 137L289.5 674M662.2 137L303.1 674M689.4 137L330.3 674M703.0 137L343.9 674M716.6 137L357.5 674M730.2 137L371.1 674M757.4 137L398.3 674M771.0 137L411.9 674M784.6 137L425.5 674M798.2 137L439.1 674M825.4 137L466.3 674M839.0 137L479.9 674M852.6 137L493.5 674M866.2 137L507.1 674M893.4 137L534.3 674M907.0 137L547.9 674M920.6 137L561.5 674M934.2 137L575.1 674M961.4 137L602.3 674M975.0 137L615.9 674M988.6 137L629.5 674M1002.2 137L643.1 674M1029.4 137L670.3 674M1043.0 137L683.9 674M1056.6 137L697.5 674M1070.2 137L711.1 674M1097.4 137L738.3 674M1111.0 137L751.9 674M1124.6 137L765.5 674M1138.2 137L779.1 674M1165.4 137L806.3 674M1179.0 137L819.9 674M1192.6 137L833.5 674M1206.2 137L847.1 674M1233.4 137L874.3 674M1247.0 137L887.9 674M1260.6 137L901.5 674M1274.2 137L915.1 674M1301.4 137L942.3 674M1315.0 137L955.9 674M1328.6 137L969.5 674M1342.2 137L983.1 674M1369.4 137L1010.3 674M1383.0 137L1023.9 674M1396.6 137L1037.5 674M1410.2 137L1051.1 674M1437.4 137L1078.3 674M1451.0 137L1091.9 674M1464.6 137L1105.5 674M1478.2 137L1119.1 674M1505.4 137L1146.3 674M1519.0 137L1159.9 674M1532.6 137L1173.5 674M1546.2 137L1187.1 674M1573.4 137L1214.3 674M1587.0 137L1227.9 674M1600.6 137L1241.5 674M1614.2 137L1255.1 674M1641.4 137L1282.3 674M1655.0 137L1295.9 674M1668.6 137L1309.5 674M1682.2 137L1323.1 674M1709.4 137L1350.3 674M1723.0 137L1363.9 674M0 103.9L1366 145.3M0 109.5L1366 150.9M0 115.1L1366 156.5M0 120.8L1366 162.1M0 132.0L1366 173.4M0 137.7L1366 179.0M0 143.3L1366 184.7M0 148.9L1366 190.3M0 160.2L1366 201.6M0 165.8L1366 207.2M0 171.4L1366 212.8M0 177.1L1366 218.5M0 188.3L1366 229.7M0 194.0L1366 235.4M0 199.6L1366 241.0M0 205.2L1366 246.6M0 216.5L1366 257.9M0 222.1L1366 263.5M0 227.8L1366 269.2M0 233.4L1366 274.8M0 244.7L1366 286.1M0 250.3L1366 291.7M0 255.9L1366 297.3M0 261.6L1366 302.9M0 272.8L1366 314.2M0 278.5L1366 319.8M0 284.1L1366 325.5M0 289.7L1366 331.1M0 301.0L1366 342.4M0 306.6L1366 348.0M0 312.2L1366 353.6M0 317.9L1366 359.3M0 329.1L1366 370.5M0 334.8L1366 376.2M0 340.4L1366 381.8M0 346.0L1366 387.4M0 357.3L1366 398.7M0 362.9L1366 404.3M0 368.6L1366 410.0M0 374.2L1366 415.6M0 385.5L1366 426.9M0 391.1L1366 432.5M0 396.7L1366 438.1M0 402.4L1366 443.7M0 413.6L1366 455.0M0 419.3L1366 460.6M0 424.9L1366 466.3M0 430.5L1366 471.9M0 441.8L1366 483.2M0 447.4L1366 488.8M0 453.0L1366 494.4M0 458.7L1366 500.1M0 469.9L1366 511.3M0 475.6L1366 517.0M0 481.2L1366 522.6M0 486.8L1366 528.2M0 498.1L1366 539.5M0 503.7L1366 545.1M0 509.4L1366 550.8M0 515.0L1366 556.4M0 526.3L1366 567.7M0 531.9L1366 573.3M0 537.5L1366 578.9M0 543.2L1366 584.5M0 554.4L1366 595.8M0 560.1L1366 601.4M0 565.7L1366 607.1M0 571.3L1366 612.7M0 582.6L1366 624.0M0 588.2L1366 629.6M0 593.8L1366 635.2M0 599.5L1366 640.9M0 610.7L1366 652.1M0 616.4L1366 657.8M0 622.0L1366 663.4M0 627.6L1366 669.0M0 638.9L1366 680.3M0 644.5L1366 685.9M0 650.2L1366 691.6M0 655.8L1366 697.2M0 667.1L1366 708.5M0 672.7L1366 714.1"/>
<path stroke="#b0b0b0" d="M63.8 137L-295.3 674M131.8 137L-227.3 674M199.8 137L-159.3 674M267.8 137L-91.3 674M335.8 137L-23.3 674M471.8 137L112.7 674M539.8 137L180.7 674M607.8 137L248.7 674M675.8 137L316.7 674M743.8 137L384.7 674M811.8 137L452.7 674M879.8 137L520.7 674M947.8 137L588.7 674M1015.8 137L656.7 674M1083.8 137L724.7 674M1151.8 137L792.7 674M1219.8 137L860.7 674M1287.8 137L928.7 674M1355.8 137L996.7 674M1423.8 137L1064.7 674M1491.8 137L1132.7 674M1559.8 137L1200.7 674M1627.8 137L1268.7 674M1695.8 137L1336.7 674M0 98.2L1366 139.6M0 126.4L1366 167.8M0 154.5L1366 195.9M0 182.7L1366 224.1M0 210.9L1366 252.3M0 239.0L1366 280.4M0 267.2L1366 308.6M0 295.3L1366 336.7M0 323.5L1366 364.9M0 351.7L1366 393.1M0 379.8L1366 421.2M0 408.0L1366 449.4M0 464.3L1366 505.7M0 492.5L1366 533.9M0 520.6L1366 562.0M0 548.8L1366 590.2M0 576.9L1366 618.3M0 605.1L1366 646.5M0 633.3L1366 674.7M0 661.4L1366 702.8"/>
<path stroke="#f08080" d="M0 436.1L199.7 442.2M199.7 442.2L1366 477.5"/>
<path stroke="#6ee66e" d="M403.8 137L290.4 306.5M197.2 446.0L44.7 674"/>
</g>
<g id="shadow" style="mix-blend-mode:multiply"><g mask="url(#mL)"><path d="M1110.0 361.0C1111.7 361.8 1118.1 363.2 1120.0 365.5C1121.9 367.8 1122.3 371.6 1121.5 375.0C1120.7 378.4 1118.2 381.7 1115.0 385.6C1111.8 389.5 1106.8 393.9 1102.0 398.5C1097.2 403.1 1091.5 408.8 1086.0 413.0C1080.5 417.2 1074.8 420.4 1069.0 423.5C1063.2 426.6 1057.2 429.2 1051.0 431.5C1044.8 433.8 1038.5 435.8 1032.0 437.5C1025.5 439.2 1018.3 440.3 1012.0 441.5C1005.7 442.7 1000.0 443.2 994.0 444.5C988.0 445.8 982.7 448.1 976.0 449.5C969.3 450.9 961.3 452.1 954.0 453.0C946.7 453.9 939.3 454.4 932.0 455.0C924.7 455.6 922.0 455.8 910.0 456.5C898.0 457.2 878.0 458.1 860.0 459.0C842.0 459.9 822.7 460.8 802.0 461.8C781.3 462.8 758.0 464.2 736.0 465.0C714.0 465.8 692.7 466.5 670.0 466.8C647.3 467.1 625.0 467.0 600.0 466.9C575.0 466.8 548.3 466.7 520.0 466.4C491.7 466.1 463.0 466.0 430.0 465.3C397.0 464.6 351.0 463.4 322.0 462.3C293.0 461.2 274.3 460.0 256.0 459.0C237.7 458.0 220.5 457.8 212.0 456.3C203.5 454.8 206.2 451.1 205.0 450.0L215 440L600 440L1000 420L1090 365Z" fill="#cccccc" filter="url(#b1)"/></g><g mask="url(#mR)"><path d="M1110.0 361.0C1111.7 361.8 1118.1 363.2 1120.0 365.5C1121.9 367.8 1122.3 371.6 1121.5 375.0C1120.7 378.4 1118.2 381.7 1115.0 385.6C1111.8 389.5 1106.8 393.9 1102.0 398.5C1097.2 403.1 1091.5 408.8 1086.0 413.0C1080.5 417.2 1074.8 420.4 1069.0 423.5C1063.2 426.6 1057.2 429.2 1051.0 431.5C1044.8 433.8 1038.5 435.8 1032.0 437.5C1025.5 439.2 1018.3 440.3 1012.0 441.5C1005.7 442.7 1000.0 443.2 994.0 444.5C988.0 445.8 982.7 448.1 976.0 449.5C969.3 450.9 961.3 452.1 954.0 453.0C946.7 453.9 939.3 454.4 932.0 455.0C924.7 455.6 922.0 455.8 910.0 456.5C898.0 457.2 878.0 458.1 860.0 459.0C842.0 459.9 822.7 460.8 802.0 461.8C781.3 462.8 758.0 464.2 736.0 465.0C714.0 465.8 692.7 466.5 670.0 466.8C647.3 467.1 625.0 467.0 600.0 466.9C575.0 466.8 548.3 466.7 520.0 466.4C491.7 466.1 463.0 466.0 430.0 465.3C397.0 464.6 351.0 463.4 322.0 462.3C293.0 461.2 274.3 460.0 256.0 459.0C237.7 458.0 220.5 457.8 212.0 456.3C203.5 454.8 206.2 451.1 205.0 450.0L215 440L600 440L1000 420L1090 365Z" fill="#c2c2c2" filter="url(#b4)"/></g></g>

<path d="M290.3 306.7C298.6 307.0 321.7 307.7 340.0 308.3C358.3 308.9 385.0 309.8 400.0 310.3C415.0 310.8 410.0 310.8 430.0 311.3C450.0 311.9 491.7 312.9 520.0 313.6C548.3 314.4 575.0 315.1 600.0 315.8C625.0 316.5 648.3 317.1 670.0 317.8C691.7 318.5 710.1 319.1 730.0 319.8C749.9 320.5 769.5 321.2 789.5 322.0C809.5 322.8 829.9 323.6 850.0 324.6C870.1 325.6 892.6 326.4 910.0 327.8C927.4 329.2 939.5 331.3 954.3 333.1C969.1 334.9 986.8 337.1 998.6 338.6C1010.4 340.1 1016.1 341.0 1025.0 341.9C1033.8 342.8 1041.4 343.6 1051.7 344.1C1062.0 344.6 1077.5 344.8 1087.0 344.8C1096.5 344.8 1103.3 344.2 1109.0 344.3C1114.7 344.4 1119.2 345.3 1121.3 345.5C1119.2 348.2 1111.8 357.8 1108.4 361.9C1105.0 366.0 1103.0 367.5 1100.7 370.0C1098.4 372.5 1096.7 374.6 1094.7 376.8C1092.7 379.0 1091.6 380.3 1088.6 383.3C1085.6 386.3 1080.8 391.5 1076.9 395.0C1073.0 398.5 1069.1 401.5 1065.2 404.4C1061.3 407.3 1057.3 410.1 1053.4 412.6C1049.5 415.1 1045.6 417.1 1041.7 419.2C1037.8 421.3 1033.5 423.3 1030.0 425.2C1026.5 427.1 1024.0 428.6 1020.7 430.4C1017.4 432.2 1014.6 434.1 1010.3 435.9C1006.0 437.6 999.9 439.4 994.7 440.9C989.5 442.4 984.3 443.7 979.1 444.8C973.9 445.9 968.6 446.9 963.4 447.6C958.2 448.3 953.0 448.8 947.8 449.1C942.6 449.5 940.0 449.6 932.0 449.7C924.0 449.8 912.0 449.7 900.0 449.7C888.0 449.7 871.7 449.8 860.0 449.9C848.3 450.0 839.5 450.1 830.0 450.3C820.5 450.5 812.8 450.7 802.8 451.0C792.8 451.3 781.1 451.9 770.0 452.3C758.9 452.7 748.1 453.2 736.4 453.6C724.7 454.0 711.1 454.5 700.0 454.8C688.9 455.1 686.7 455.3 670.0 455.5C653.3 455.7 625.0 455.8 600.0 455.8C575.0 455.8 548.3 455.8 520.0 455.6C491.7 455.4 453.3 455.1 430.0 454.7C406.7 454.3 397.9 453.9 380.0 453.3C362.1 452.7 341.1 451.9 322.8 451.2C304.5 450.5 285.2 449.5 270.0 448.9C254.8 448.2 243.1 447.6 231.7 447.1C220.3 446.6 206.5 445.9 201.5 445.7C201.4 445.2 200.8 444.2 200.7 442.5C200.6 440.8 200.6 438.1 200.9 435.2C201.2 432.2 201.7 428.4 202.5 424.8C203.3 421.2 204.4 417.1 205.6 413.3C206.8 409.5 208.2 405.7 209.8 401.9C211.4 398.1 213.1 394.0 215.0 390.4C216.9 386.8 218.8 383.6 221.2 380.0C223.7 376.4 226.2 373.1 229.6 368.6C233.0 364.1 237.9 357.8 241.9 352.8C245.9 347.8 249.7 343.1 253.6 338.7C257.5 334.3 261.4 330.1 265.3 326.4C269.2 322.7 272.8 319.7 277.0 316.4C281.2 313.1 288.1 308.3 290.3 306.7Z" fill="#fff" stroke="#fff" stroke-width="3.200" stroke-linejoin="round"/>

<g id="body">
<path d="M290.3 306.7C298.6 307.0 321.7 307.7 340.0 308.3C358.3 308.9 385.0 309.8 400.0 310.3C415.0 310.8 410.0 310.8 430.0 311.3C450.0 311.9 491.7 312.9 520.0 313.6C548.3 314.4 575.0 315.1 600.0 315.8C625.0 316.5 648.3 317.1 670.0 317.8C691.7 318.5 710.1 319.1 730.0 319.8C749.9 320.5 769.5 321.2 789.5 322.0C809.5 322.8 829.9 323.6 850.0 324.6C870.1 325.6 892.6 326.4 910.0 327.8C927.4 329.2 939.5 331.3 954.3 333.1C969.1 334.9 986.8 337.1 998.6 338.6C1010.4 340.1 1016.1 341.0 1025.0 341.9C1033.8 342.8 1041.4 343.6 1051.7 344.1C1062.0 344.6 1077.5 344.8 1087.0 344.8C1096.5 344.8 1103.3 344.2 1109.0 344.3C1114.7 344.4 1119.2 345.3 1121.3 345.5C1119.2 348.2 1111.8 357.8 1108.4 361.9C1105.0 366.0 1103.0 367.5 1100.7 370.0C1098.4 372.5 1096.7 374.6 1094.7 376.8C1092.7 379.0 1091.6 380.3 1088.6 383.3C1085.6 386.3 1080.8 391.5 1076.9 395.0C1073.0 398.5 1069.1 401.5 1065.2 404.4C1061.3 407.3 1057.3 410.1 1053.4 412.6C1049.5 415.1 1045.6 417.1 1041.7 419.2C1037.8 421.3 1033.5 423.3 1030.0 425.2C1026.5 427.1 1024.0 428.6 1020.7 430.4C1017.4 432.2 1014.6 434.1 1010.3 435.9C1006.0 437.6 999.9 439.4 994.7 440.9C989.5 442.4 984.3 443.7 979.1 444.8C973.9 445.9 968.6 446.9 963.4 447.6C958.2 448.3 953.0 448.8 947.8 449.1C942.6 449.5 940.0 449.6 932.0 449.7C924.0 449.8 912.0 449.7 900.0 449.7C888.0 449.7 871.7 449.8 860.0 449.9C848.3 450.0 839.5 450.1 830.0 450.3C820.5 450.5 812.8 450.7 802.8 451.0C792.8 451.3 781.1 451.9 770.0 452.3C758.9 452.7 748.1 453.2 736.4 453.6C724.7 454.0 711.1 454.5 700.0 454.8C688.9 455.1 686.7 455.3 670.0 455.5C653.3 455.7 625.0 455.8 600.0 455.8C575.0 455.8 548.3 455.8 520.0 455.6C491.7 455.4 453.3 455.1 430.0 454.7C406.7 454.3 397.9 453.9 380.0 453.3C362.1 452.7 341.1 451.9 322.8 451.2C304.5 450.5 285.2 449.5 270.0 448.9C254.8 448.2 243.1 447.6 231.7 447.1C220.3 446.6 206.5 445.9 201.5 445.7C201.4 445.2 200.8 444.2 200.7 442.5C200.6 440.8 200.6 438.1 200.9 435.2C201.2 432.2 201.7 428.4 202.5 424.8C203.3 421.2 204.4 417.1 205.6 413.3C206.8 409.5 208.2 405.7 209.8 401.9C211.4 398.1 213.1 394.0 215.0 390.4C216.9 386.8 218.8 383.6 221.2 380.0C223.7 376.4 226.2 373.1 229.6 368.6C233.0 364.1 237.9 357.8 241.9 352.8C245.9 347.8 249.7 343.1 253.6 338.7C257.5 334.3 261.4 330.1 265.3 326.4C269.2 322.7 272.8 319.7 277.0 316.4C281.2 313.1 288.1 308.3 290.3 306.7Z" fill="url(#bodyg)"/>
<g clip-path="url(#bodyc)">
<g mask="url(#mR2)">
<path d="M1121.3 345.5C1119.2 348.2 1111.8 357.8 1108.4 361.9C1105.0 366.0 1103.0 367.5 1100.7 370.0C1098.4 372.5 1096.7 374.6 1094.7 376.8C1092.7 379.0 1091.6 380.3 1088.6 383.3C1085.6 386.3 1080.8 391.5 1076.9 395.0C1073.0 398.5 1069.1 401.5 1065.2 404.4C1061.3 407.3 1057.3 410.1 1053.4 412.6C1049.5 415.1 1045.6 417.1 1041.7 419.2C1037.8 421.3 1033.5 423.3 1030.0 425.2C1026.5 427.1 1024.0 428.6 1020.7 430.4C1017.4 432.2 1014.6 434.1 1010.3 435.9C1006.0 437.6 999.9 439.4 994.7 440.9C989.5 442.4 984.3 443.7 979.1 444.8C973.9 445.9 968.6 446.9 963.4 447.6C958.2 448.3 953.0 448.8 947.8 449.1C942.6 449.5 940.0 449.6 932.0 449.7C924.0 449.8 912.0 449.7 900.0 449.7C888.0 449.7 871.7 449.8 860.0 449.9C848.3 450.0 839.5 450.1 830.0 450.3C820.5 450.5 812.8 450.7 802.8 451.0C792.8 451.3 781.1 451.9 770.0 452.3C758.9 452.7 748.1 453.2 736.4 453.6C724.7 454.0 711.1 454.5 700.0 454.8C688.9 455.1 686.7 455.3 670.0 455.5C653.3 455.7 625.0 455.8 600.0 455.8C575.0 455.8 548.3 455.8 520.0 455.6C491.7 455.4 453.3 455.1 430.0 454.7C406.7 454.3 397.9 453.9 380.0 453.3C362.1 452.7 341.1 451.9 322.8 451.2C304.5 450.5 285.2 449.5 270.0 448.9C254.8 448.2 243.1 447.6 231.7 447.1C220.3 446.6 206.5 445.9 201.5 445.7" fill="none" stroke="#6f90c6" stroke-width="18" filter="url(#b6)" transform="translate(-11,-15)" opacity=".8"/>
</g>
<g mask="url(#mL2)"><path d="M1121.3 345.5C1119.2 348.2 1111.8 357.8 1108.4 361.9C1105.0 366.0 1103.0 367.5 1100.7 370.0C1098.4 372.5 1096.7 374.6 1094.7 376.8C1092.7 379.0 1091.6 380.3 1088.6 383.3C1085.6 386.3 1080.8 391.5 1076.9 395.0C1073.0 398.5 1069.1 401.5 1065.2 404.4C1061.3 407.3 1057.3 410.1 1053.4 412.6C1049.5 415.1 1045.6 417.1 1041.7 419.2C1037.8 421.3 1033.5 423.3 1030.0 425.2C1026.5 427.1 1024.0 428.6 1020.7 430.4C1017.4 432.2 1014.6 434.1 1010.3 435.9C1006.0 437.6 999.9 439.4 994.7 440.9C989.5 442.4 984.3 443.7 979.1 444.8C973.9 445.9 968.6 446.9 963.4 447.6C958.2 448.3 953.0 448.8 947.8 449.1C942.6 449.5 940.0 449.6 932.0 449.7C924.0 449.8 912.0 449.7 900.0 449.7C888.0 449.7 871.7 449.8 860.0 449.9C848.3 450.0 839.5 450.1 830.0 450.3C820.5 450.5 812.8 450.7 802.8 451.0C792.8 451.3 781.1 451.9 770.0 452.3C758.9 452.7 748.1 453.2 736.4 453.6C724.7 454.0 711.1 454.5 700.0 454.8C688.9 455.1 686.7 455.3 670.0 455.5C653.3 455.7 625.0 455.8 600.0 455.8C575.0 455.8 548.3 455.8 520.0 455.6C491.7 455.4 453.3 455.1 430.0 454.7C406.7 454.3 397.9 453.9 380.0 453.3C362.1 452.7 341.1 451.9 322.8 451.2C304.5 450.5 285.2 449.5 270.0 448.9C254.8 448.2 243.1 447.6 231.7 447.1C220.3 446.6 206.5 445.9 201.5 445.7" fill="none" stroke="#8fb2e8" stroke-width="5" filter="url(#b3)" transform="translate(0,-9)" opacity=".8"/></g>
<g mask="url(#mH)"><path d="M1121.3 345.5C1119.2 348.2 1111.8 357.8 1108.4 361.9C1105.0 366.0 1103.0 367.5 1100.7 370.0C1098.4 372.5 1096.7 374.6 1094.7 376.8C1092.7 379.0 1091.6 380.3 1088.6 383.3C1085.6 386.3 1080.8 391.5 1076.9 395.0C1073.0 398.5 1069.1 401.5 1065.2 404.4C1061.3 407.3 1057.3 410.1 1053.4 412.6C1049.5 415.1 1045.6 417.1 1041.7 419.2C1037.8 421.3 1033.5 423.3 1030.0 425.2C1026.5 427.1 1024.0 428.6 1020.7 430.4C1017.4 432.2 1014.6 434.1 1010.3 435.9C1006.0 437.6 999.9 439.4 994.7 440.9C989.5 442.4 984.3 443.7 979.1 444.8C973.9 445.9 968.6 446.9 963.4 447.6C958.2 448.3 953.0 448.8 947.8 449.1C942.6 449.5 940.0 449.6 932.0 449.7C924.0 449.8 912.0 449.7 900.0 449.7C888.0 449.7 871.7 449.8 860.0 449.9C848.3 450.0 839.5 450.1 830.0 450.3C820.5 450.5 812.8 450.7 802.8 451.0C792.8 451.3 781.1 451.9 770.0 452.3C758.9 452.7 748.1 453.2 736.4 453.6C724.7 454.0 711.1 454.5 700.0 454.8C688.9 455.1 686.7 455.3 670.0 455.5C653.3 455.7 625.0 455.8 600.0 455.8C575.0 455.8 548.3 455.8 520.0 455.6C491.7 455.4 453.3 455.1 430.0 454.7C406.7 454.3 397.9 453.9 380.0 453.3C362.1 452.7 341.1 451.9 322.8 451.2C304.5 450.5 285.2 449.5 270.0 448.9C254.8 448.2 243.1 447.6 231.7 447.1C220.3 446.6 206.5 445.9 201.5 445.7" fill="none" stroke="#a8cbfa" stroke-width="2.200" filter="url(#b08)" transform="translate(0,-6.300)"/></g>
<path d="M1121.3 345.5C1119.2 348.2 1111.8 357.8 1108.4 361.9C1105.0 366.0 1103.0 367.5 1100.7 370.0C1098.4 372.5 1096.7 374.6 1094.7 376.8C1092.7 379.0 1091.6 380.3 1088.6 383.3C1085.6 386.3 1080.8 391.5 1076.9 395.0C1073.0 398.5 1069.1 401.5 1065.2 404.4C1061.3 407.3 1057.3 410.1 1053.4 412.6C1049.5 415.1 1045.6 417.1 1041.7 419.2C1037.8 421.3 1033.5 423.3 1030.0 425.2C1026.5 427.1 1024.0 428.6 1020.7 430.4C1017.4 432.2 1014.6 434.1 1010.3 435.9C1006.0 437.6 999.9 439.4 994.7 440.9C989.5 442.4 984.3 443.7 979.1 444.8C973.9 445.9 968.6 446.9 963.4 447.6C958.2 448.3 953.0 448.8 947.8 449.1C942.6 449.5 940.0 449.6 932.0 449.7C924.0 449.8 912.0 449.7 900.0 449.7C888.0 449.7 871.7 449.8 860.0 449.9C848.3 450.0 839.5 450.1 830.0 450.3C820.5 450.5 812.8 450.7 802.8 451.0C792.8 451.3 781.1 451.9 770.0 452.3C758.9 452.7 748.1 453.2 736.4 453.6C724.7 454.0 711.1 454.5 700.0 454.8C688.9 455.1 686.7 455.3 670.0 455.5C653.3 455.7 625.0 455.8 600.0 455.8C575.0 455.8 548.3 455.8 520.0 455.6C491.7 455.4 453.3 455.1 430.0 454.7C406.7 454.3 397.9 453.9 380.0 453.3C362.1 452.7 341.1 451.9 322.8 451.2C304.5 450.5 285.2 449.5 270.0 448.9C254.8 448.2 243.1 447.6 231.7 447.1C220.3 446.6 206.5 445.9 201.5 445.7" fill="none" stroke="#6288c6" stroke-width="9" filter="url(#b15)"/>
<path d="M1121.3 345.5C1119.2 348.2 1111.8 357.8 1108.4 361.9C1105.0 366.0 1103.0 367.5 1100.7 370.0C1098.4 372.5 1096.7 374.6 1094.7 376.8C1092.7 379.0 1091.6 380.3 1088.6 383.3C1085.6 386.3 1080.8 391.5 1076.9 395.0C1073.0 398.5 1069.1 401.5 1065.2 404.4C1061.3 407.3 1057.3 410.1 1053.4 412.6C1049.5 415.1 1045.6 417.1 1041.7 419.2C1037.8 421.3 1033.5 423.3 1030.0 425.2C1026.5 427.1 1024.0 428.6 1020.7 430.4C1017.4 432.2 1014.6 434.1 1010.3 435.9C1006.0 437.6 999.9 439.4 994.7 440.9C989.5 442.4 984.3 443.7 979.1 444.8C973.9 445.9 968.6 446.9 963.4 447.6C958.2 448.3 953.0 448.8 947.8 449.1C942.6 449.5 940.0 449.6 932.0 449.7C924.0 449.8 912.0 449.7 900.0 449.7C888.0 449.7 871.7 449.8 860.0 449.9C848.3 450.0 839.5 450.1 830.0 450.3C820.5 450.5 812.8 450.7 802.8 451.0C792.8 451.3 781.1 451.9 770.0 452.3C758.9 452.7 748.1 453.2 736.4 453.6C724.7 454.0 711.1 454.5 700.0 454.8C688.9 455.1 686.7 455.3 670.0 455.5C653.3 455.7 625.0 455.8 600.0 455.8C575.0 455.8 548.3 455.8 520.0 455.6C491.7 455.4 453.3 455.1 430.0 454.7C406.7 454.3 397.9 453.9 380.0 453.3C362.1 452.7 341.1 451.9 322.8 451.2C304.5 450.5 285.2 449.5 270.0 448.9C254.8 448.2 243.1 447.6 231.7 447.1C220.3 446.6 206.5 445.9 201.5 445.7" fill="none" stroke="#5a80c0" stroke-width="3" filter="url(#b08)"/>
<!-- axis through body --><path d="M500 451.300L660 456.150" shape-rendering="crispEdges" stroke="#e58aa0" stroke-width=".800" opacity=".55" fill="none"/>
</g>
<g shape-rendering="crispEdges" fill="none" stroke-width=".900">
<path d="M299.7 307.3h8.9M327.0 308.3h11.1M357.6 309.3h10.7M387.4 310.3h10.5M417.8 311.3h11.3M452.5 312.3h14.1M491.9 313.3h14.0M530.4 314.3h13.3M567.0 315.3h12.8M602.9 316.3h12.9M638.5 317.3h12.5M672.3 318.3h11.3M703.2 319.3h10.5M732.2 320.3h10.1M760.0 321.3h9.6M786.3 322.3h9.0M811.1 323.3h8.5M834.3 324.3h7.8M856.2 325.3h7.7M877.5 326.3h7.3M896.3 327.3h5.7M910.6 328.3h4.0M921.1 329.3h3.1M929.7 330.3h2.8M937.5 331.3h2.5M944.8 332.3h2.6M952.6 333.3h2.9M960.7 334.3h2.8M968.7 335.3h2.8M976.7 336.3h2.8M984.7 337.3h2.8M992.7 338.3h2.8M1000.7 339.3h2.8M1008.6 340.3h2.6M1016.3 341.3h2.9M1025.1 342.3h3.3M1035.1 343.3h3.9M1050.2 344.3h7.7M1077.5 345.3h13.0M1104.9 344.3h4.6M1116.1 345.3h2.9" stroke="#4876c4" stroke-width="1"/>
<path d="M290.8 307.3h6.9M315.9 308.3h8.6M346.9 309.3h8.3M376.9 310.3h8.2M406.4 311.3h8.8M438.3 312.3h11.0M477.8 313.3h10.9M517.0 314.3h10.4M554.3 315.3h9.9M590.0 316.3h10.0M626.0 317.3h9.7M660.9 318.3h8.8M692.6 319.3h8.2M722.1 320.3h7.8M750.3 321.3h7.5M777.3 322.3h7.0M802.5 323.3h6.7M826.5 324.3h6.1M848.5 325.3h6.0M870.2 326.3h5.7M890.6 327.3h4.4M906.5 328.3h3.2M918.0 329.3h2.5M927.0 330.3h2.2M934.9 331.3h2.0M942.2 332.3h2.0M949.7 333.3h2.2M958.0 334.3h2.2M966.0 335.3h2.2M974.0 336.3h2.2M982.0 337.3h2.2M990.0 338.3h2.2M998.0 339.3h2.2M1005.9 340.3h2.0M1013.5 341.3h2.2M1021.7 342.3h2.6M1031.3 343.3h3.0M1042.5 344.3h6.0M1064.5 345.3h10.1M1100.3 344.3h3.6M1113.2 345.3h2.2M1121.3 346.3h1.0" stroke="#5c5c5c" stroke-width="1"/>
</g>
<path d="M201.5 445.7C201.4 445.2 200.8 444.2 200.7 442.5C200.6 440.8 200.6 438.1 200.9 435.2C201.2 432.2 201.7 428.4 202.5 424.8C203.3 421.2 204.4 417.1 205.6 413.3C206.8 409.5 208.2 405.7 209.8 401.9C211.4 398.1 213.1 394.0 215.0 390.4C216.9 386.8 218.8 383.6 221.2 380.0C223.7 376.4 226.2 373.1 229.6 368.6C233.0 364.1 237.9 357.8 241.9 352.8C245.9 347.8 249.7 343.1 253.6 338.7C257.5 334.3 261.4 330.1 265.3 326.4C269.2 322.7 272.8 319.7 277.0 316.4C281.2 313.1 288.1 308.3 290.3 306.7" fill="none" stroke="#4f7ac0" stroke-width="1" opacity=".8"/>
</g>

<g id="viewcube">
 <path d="M1292.900 176l11.100 -11l34 -.7v33.500l-5.300 14.600l-35.700 -1.200z" fill="#e2e2e2" opacity=".55" filter="url(#b1)" transform="translate(3,4)"/>
 <path d="M1292.900 176l11.100 -11l34 -.7l-7 12.100z" fill="#efefef" opacity=".8"/>
 <path d="M1331 176.400l7 -12.100v33.500l-5.300 14.600z" fill="#e0e0e0" opacity=".8"/>
 <path d="M1292.900 176l38.100 .4l1.700 36l-35.700 -1.200z" fill="#e9e9e9" opacity=".8"/>
 <path d="M1292.900 176l38.100 .4l1.700 36 M1304 165l34 -.7v33.500 M1331 176.400l7 -12.100" fill="none" stroke="#888" stroke-width=".9" stroke-dasharray="7 2"/>
 <path d="M1290.500 171.400l6.500 39.800" stroke="#4b4bf5" stroke-width="2.200"/>
 <path d="M1297 211.200l42.200 3" stroke="#e37777" stroke-width="1.600"/>
 <text x="1312.800" y="198" font-family="Liberation Sans, sans-serif" font-size="8.500" fill="#8a8a8a" text-anchor="middle" textLength="27" lengthAdjust="spacingAndGlyphs" transform="rotate(1.500 1312 195)">FRONT</text>
 <text transform="translate(1308.500,173) matrix(1,0,-.950,.400,0,0)" font-family="Liberation Sans, sans-serif" font-size="7.500" fill="#9a9a9a">TOP</text>
 <text transform="translate(1332.800,203) matrix(.190,-.340,0,1,0,0)" font-family="Liberation Sans, sans-serif" font-size="8" fill="#9a9a9a">RIGHT</text>
 <text x="1289.300" y="168.300" font-family="Liberation Sans, sans-serif" font-size="10" font-weight="bold" fill="#9494f6" text-anchor="middle">Z</text>
 <text x="1345.300" y="218" font-family="Liberation Sans, sans-serif" font-size="10" fill="#ee9a9a" text-anchor="middle">X</text>
</g>

</svg>
</div>
<div class="abs" style="left:0;top:136px;width:1366px;height:1px;background:#d6d6d6"></div><div class="abs" style="left:0;top:137px;width:1366px;height:1.5px;background:#eee"></div>
<div class="abs" style="left:4px;top:143px;width:300px;height:25px;background:#f1f1f1;border:1px solid #cfcfcf"></div>
<span class="t" style="left:29.3px;top:148.19px;font-size:11px;line-height:15px;letter-spacing:-0.734px;color:#4a4a4a;">BROWSER</span>
<div class="abs" style="left:40.0px;top:175.0px;width:225.0px;height:17px;background:#ececec"></div>
<div class="abs" style="left:65.0px;top:174.8px;width:153.7px;height:17px;background:#9a9a9a"></div>
<div class="abs" style="left:58.0px;top:197.3px;width:133.8px;height:20px;background:#efefef"></div>
<div class="abs" style="left:58.0px;top:221.4px;width:109.5px;height:20px;background:#efefef"></div>
<div class="abs" style="left:58.0px;top:245.4px;width:94.3px;height:20px;background:#efefef"></div>
<div class="abs" style="left:58.0px;top:269.2px;width:102.5px;height:20px;background:#efefef"></div>
<div class="abs" style="left:58.0px;top:293.2px;width:114.8px;height:20px;background:#efefef"></div>
<div class="abs" style="left:58.0px;top:317.2px;width:130.9px;height:20px;background:#efefef"></div>
<span class="t" style="left:98.0px;top:175.99px;font-size:11px;line-height:15px;letter-spacing:-0.004px;font-weight:bold;color:#fff;">CLARK Y 0 derajat v5</span>
<span class="t" style="left:91.4px;top:199.99px;font-size:11px;line-height:15px;letter-spacing:-0.214px;color:#222;">Document Settings</span>
<span class="t" style="left:91.4px;top:224.09px;font-size:11px;line-height:15px;letter-spacing:-0.033px;color:#222;">Named Views</span>
<span class="t" style="left:116.3px;top:248.09px;font-size:11px;line-height:15px;letter-spacing:-0.357px;color:#222;">Origin</span>
<span class="t" style="left:116.3px;top:271.89px;font-size:11px;line-height:15px;letter-spacing:-0.239px;color:#222;">Bodies</span>
<span class="t" style="left:116.3px;top:295.89px;font-size:11px;line-height:15px;letter-spacing:-0.131px;color:#222;">Sketches</span>
<span class="t" style="left:116.3px;top:319.89px;font-size:11px;line-height:15px;letter-spacing:-0.121px;color:#222;">Construction</span>
<svg width="320" height="240" viewBox="0 137 320 240" style="left:0;top:137px">
<path d="M19.300 150.800v7.600l-5 -3.800z M13.800 150.800v7.600l-5 -3.800z" fill="#333"/>
<circle cx="287.300" cy="155.200" r="4.600" fill="#111"/><path d="M284.500 155.200h5.600" stroke="#f1f1f1" stroke-width="1.400"/>
<path d="M299.500 150v10.500M301.500 152v6.500" stroke="#666" stroke-width="1"/>
<path d="M21.500 189l10 -11v11z" fill="#8a8a8a" stroke="#222" stroke-width="1.100" stroke-linejoin="round"/>
<g transform="translate(51.0,183.3)"><path d="M-7.500 0q7.500 -8.500 15 0q-7.500 8.500 -15 0z" fill="#9b9b9b"/><circle r="3.300" fill="#f0f0f0"/><circle r="2" fill="#9b9b9b"/></g>
<g transform="translate(68,176)"><path d="M0.500 4l3.500 -3.500h11v10.500l-3.500 3.500h-11z" fill="#f4f4f4" stroke="#555" stroke-width="1"/><path d="M0.500 4h11v10.500M11.500 4l3.500 -3.500" fill="none" stroke="#555" stroke-width=".9"/><path d="M1 4.500h10v9.500h-10z" fill="#e2e2e2"/></g>
<circle cx="228.700" cy="183.300" r="7.200" fill="#10408f"/><text x="228" y="187.400" font-family="Liberation Sans, sans-serif" font-weight="bold" font-size="11" fill="#fff" text-anchor="middle">C</text><rect x="231.500" y="186" width="4" height="4" rx="1" fill="#fff" stroke="#10408f" stroke-width=".8"/>
<circle cx="250.400" cy="183.300" r="5.700" fill="#fff" stroke="#222" stroke-width="1.200"/><circle cx="250.400" cy="183.300" r="2.300" fill="#222"/>
<path transform="translate(40.4,207.3)" d="M.6 -5.800l7.600 5.800l-7.600 5.800z" fill="#fff" stroke="#222" stroke-width="1.200" stroke-linejoin="miter"/>
<path transform="translate(40.4,231.4)" d="M.6 -5.800l7.600 5.800l-7.600 5.800z" fill="#fff" stroke="#222" stroke-width="1.200" stroke-linejoin="miter"/>
<path transform="translate(40.4,255.4)" d="M.6 -5.800l7.600 5.800l-7.600 5.800z" fill="#fff" stroke="#222" stroke-width="1.200" stroke-linejoin="miter"/>
<path transform="translate(40.4,279.2)" d="M.6 -5.800l7.600 5.800l-7.600 5.800z" fill="#fff" stroke="#222" stroke-width="1.200" stroke-linejoin="miter"/>
<path transform="translate(40.4,303.2)" d="M.6 -5.800l7.600 5.800l-7.600 5.800z" fill="#fff" stroke="#222" stroke-width="1.200" stroke-linejoin="miter"/>
<path transform="translate(40.4,327.2)" d="M.6 -5.800l7.600 5.800l-7.600 5.800z" fill="#fff" stroke="#222" stroke-width="1.200" stroke-linejoin="miter"/>
<path d="M77.16 206.48L77.16 208.12L74.83 209.13L74.36 210.27L75.29 212.63L74.13 213.79L71.77 212.86L70.63 213.33L69.62 215.66L67.98 215.66L66.97 213.33L65.83 212.86L63.47 213.79L62.31 212.63L63.24 210.27L62.77 209.13L60.44 208.12L60.44 206.48L62.77 205.47L63.24 204.33L62.31 201.97L63.47 200.81L65.83 201.74L66.97 201.27L67.98 198.94L69.62 198.94L70.63 201.27L71.77 201.74L74.13 200.81L75.29 201.97L74.36 204.33L74.83 205.47Z" fill="#8c8c8c"/>
<circle cx="68.800" cy="207.300" r="3.400" fill="#efefef"/>
<path transform="translate(61.0,225.3)" d="M0 0h6.500l1 2h8.800v10h-16.300z" fill="#9a9a9a"/>
<g transform="translate(68.8,255.4)" fill="none" stroke="#a6a6a6" stroke-width="1.100"><path d="M-7.500 0q7.500 -8 15 0q-7.500 8 -15 0z"/><circle r="2.600"/><path d="M-6.500 -4l12.500 8.500M-3.500 -5.500l11.500 8"/></g>
<path transform="translate(85.8,249.3)" d="M0 0h6.500l1 2h8.800v10h-16.300z" fill="#9a9a9a"/>
<g transform="translate(68.8,279.2)"><path d="M-7.500 0q7.500 -8.500 15 0q-7.500 8.500 -15 0z" fill="#9b9b9b"/><circle r="3.300" fill="#f0f0f0"/><circle r="2" fill="#9b9b9b"/></g>
<path transform="translate(85.8,273.1)" d="M0 0h6.500l1 2h8.800v10h-16.300z" fill="#9a9a9a"/>
<g transform="translate(68.8,303.2)"><path d="M-7.500 0q7.500 -8.500 15 0q-7.500 8.500 -15 0z" fill="#9b9b9b"/><circle r="3.300" fill="#f0f0f0"/><circle r="2" fill="#9b9b9b"/></g>
<path transform="translate(85.8,297.1)" d="M0 0h6.500l1 2h8.800v10h-16.300z" fill="#9a9a9a"/>
<g transform="translate(68.8,327.2)"><path d="M-7.500 0q7.500 -8.500 15 0q-7.500 8.500 -15 0z" fill="#9b9b9b"/><circle r="3.300" fill="#f0f0f0"/><circle r="2" fill="#9b9b9b"/></g>
<path transform="translate(85.8,321.1)" d="M0 0h6.500l1 2h8.800v10h-16.300z" fill="#9a9a9a"/>
<path d="M83.5 285.800l3.200 -2.600M88.8 285.800l3.200 -2.600M94.1 285.800l3.200 -2.600M99.4 285.800l3.200 -2.600M104.7 285.800l3.200 -2.600M110.0 285.800l3.200 -2.600M115.3 285.800l3.200 -2.600M120.6 285.800l3.200 -2.600M125.9 285.800l3.200 -2.600M131.2 285.800l3.200 -2.600M136.5 285.800l3.200 -2.600M141.8 285.800l3.200 -2.600M147.1 285.800l3.200 -2.600M152.4 285.800l3.200 -2.600M157.7 285.800l3.200 -2.600" stroke="#5b80c2" stroke-width="1.500" fill="none"/>
</svg>
<div class="abs" style="left:4px;top:645px;width:300px;height:25px;background:#f1f1f1;border:1px solid #cfcfcf"></div>
<span class="t" style="left:29.3px;top:650.29px;font-size:11px;line-height:15px;letter-spacing:-0.958px;color:#5c5c5c;">COMMENTS</span>
<svg width="40" height="25" viewBox="0 0 40 25" style="left:275px;top:645px"><circle cx="12.300" cy="12.200" r="4.600" fill="#111"/><path d="M9.500 12.200h5.600M12.300 9.400v5.600" stroke="#f1f1f1" stroke-width="1.300"/><path d="M24.500 7v10.500M26.500 9v6.500" stroke="#666" stroke-width="1"/></svg>
<div class="abs" style="left:564px;top:646px;width:237px;height:23px;background:#f0f0f0"></div>
<svg width="237" height="23" viewBox="564 646 237 23" style="left:564px;top:646px">
<g fill="#222">
<path d="M587.900 656h6.200l-3.100 3.700z"/><path d="M699 656h6.200l-3.100 3.700z"/><path d="M729 656h6.200l-3.100 3.700z"/><path d="M760 656h6.200l-3.100 3.700z"/><path d="M790.900 656h6.200l-3.100 3.700z"/>
</g>
<!-- orbit -->
<g fill="none" stroke="#3c4858" stroke-width="1">
<ellipse cx="574.800" cy="657.800" rx="3.300" ry="7.600"/>
<path d="M569.500 655.300q-2.500 1 -2.300 2.700q.5 2.600 7.600 2.900q7.300 -.2 7.700 -3q.1 -1.800 -3 -2.800"/>
<path d="M576.500 652v3M575 653.500h3M579.500 654.500v2.600M578.200 655.800h2.600" stroke-width=".9"/>
</g>
<path d="M574.300 655.600v4M572.300 657.600h4" stroke="#1f7ee6" stroke-width="1.500"/>
<!-- look at -->
<path d="M601.900 655.400l3.800 -4.300l2.400 1.900l4.300 -1.400v3.800" fill="#aeb4bd" stroke="#3c4858" stroke-width="1"/>
<rect x="600.500" y="655.400" width="15.200" height="10" fill="#f4f4f4" stroke="#3c4858" stroke-width="1.200"/>
<rect x="603.300" y="658.800" width="9.100" height="3.800" fill="#a6adb8" stroke="#3c4858" stroke-width=".9"/>
<!-- hand -->
<path d="M630.200 665.500q-1.500 -2.500 -3.800 -5.600q-.6 -1.500 .8 -1.600q1.600 .2 3 2.400v-7.300q.2 -1.300 1.200 -1.200q.9 .1 1 1.300v-2q.2 -1.200 1.200 -1.200t1.100 1.200v.8q.2 -1.100 1.100 -1.100q1 0 1.100 1.200v1.300q.3 -.9 1.100 -.8q.9 .1 1 1.200v6.500q-.2 3 -1.600 5z" fill="#f6f6f6" stroke="#3c4858" stroke-width="1" stroke-linejoin="round"/>
<path d="M632.400 653.500v4.500M634.700 652.500v5.500M637 653.500v4.500" stroke="#3c4858" stroke-width=".9" fill="none"/>
<!-- zoom -->
<circle cx="656.700" cy="656.900" r="4.400" fill="#e9f3f7" stroke="#3c4858" stroke-width="1.100"/>
<path d="M660 660.200l4.300 3.900" stroke="#3c4858" stroke-width="2.300" stroke-linecap="round"/>
<path d="M663.500 653h4.400M665.700 650.800v4.400M663.500 656.800h4.400" stroke="#3c4858" stroke-width=".9"/>
<!-- fit -->
<circle cx="684.300" cy="656.400" r="5.700" fill="#e3eef2" stroke="#2a2a2a" stroke-width="1.400"/>
<rect x="681.500" y="653.500" width="5.800" height="5.700" fill="#f6f6f6" stroke="#3c3c3c" stroke-width="1"/>
<path d="M688.600 660.600l4.800 4.400" stroke="#2a2a2a" stroke-width="2.400" stroke-linecap="round"/>
<!-- display -->
<rect x="711.200" y="650.500" width="15.700" height="12" rx="1" fill="#eee" stroke="#444" stroke-width="1"/>
<rect x="713.400" y="652.500" width="11.300" height="7.600" rx=".8" fill="#a9c4e8" stroke="#2c4a8a" stroke-width="1.100"/>
<path d="M717 663h4.200l.9 2.400h-6z" fill="#f4f4f4" stroke="#555" stroke-width=".8"/>
<!-- grid -->
<rect x="742.400" y="650.500" width="15.300" height="15.200" rx="1" fill="#5a5d63"/>
<g fill="#f2f2f2">
<rect x="743.700" y="651.800" width="2" height="2"/><rect x="746.600" y="651.800" width="2" height="2"/><rect x="749.500" y="651.800" width="2" height="2"/><rect x="752.400" y="651.800" width="2" height="2"/><rect x="755.300" y="651.800" width="1.800" height="2"/>
<rect x="743.700" y="654.700" width="2" height="2"/><rect x="746.600" y="654.700" width="2" height="2"/><rect x="749.500" y="654.700" width="2" height="2"/><rect x="752.400" y="654.700" width="2" height="2"/><rect x="755.300" y="654.700" width="1.800" height="2"/>
<rect x="743.700" y="657.600" width="2" height="2" opacity=".9"/><rect x="746.600" y="657.600" width="2" height="2" opacity=".9"/><rect x="749.500" y="657.600" width="2" height="2" opacity=".9"/><rect x="752.400" y="657.600" width="2" height="2" opacity=".9"/><rect x="755.300" y="657.600" width="1.800" height="2" opacity=".9"/>
<rect x="743.700" y="660.500" width="2" height="2" opacity=".75"/><rect x="746.600" y="660.500" width="2" height="2" opacity=".75"/><rect x="749.500" y="660.500" width="2" height="2" opacity=".75"/><rect x="752.400" y="660.500" width="2" height="2" opacity=".75"/><rect x="755.300" y="660.500" width="1.800" height="2" opacity=".75"/>
<rect x="743.700" y="663.400" width="2" height="1.600" opacity=".6"/><rect x="746.600" y="663.400" width="2" height="1.600" opacity=".6"/><rect x="749.500" y="663.400" width="2" height="1.600" opacity=".6"/><rect x="752.400" y="663.400" width="2" height="1.600" opacity=".6"/><rect x="755.300" y="663.400" width="1.800" height="1.600" opacity=".6"/>
</g>
<!-- viewports -->
<g fill="#a9c0e4" stroke="#24418a" stroke-width="1.100">
<rect x="773.600" y="651.600" width="6.400" height="5.400" rx="1"/><rect x="781.400" y="651.600" width="6.400" height="5.400" rx="1"/>
<rect x="773.600" y="658.300" width="6.400" height="5.400" rx="1"/><rect x="781.400" y="658.300" width="6.400" height="5.400" rx="1"/>
</g>
<g fill="#7d9bd0"><rect x="775.600" y="653.500" width="2.600" height="1.500"/><rect x="783.400" y="653.500" width="2.600" height="1.500"/><rect x="775.600" y="660.200" width="2.600" height="1.500"/><rect x="783.400" y="660.200" width="2.600" height="1.500"/></g>

</svg>
<span class="t" style="left:1183.0px;top:651.09px;font-size:11px;line-height:15px;letter-spacing:0.002px;font-weight:bold;color:#222;">1 Face | Area : 2.909E+05 mm^2</span>
<div id="timeline"></div>
<svg width="1366" height="54" viewBox="0 674 1366 54" style="left:0;top:674px">
<g fill="#444">
<rect x="10.800" y="692" width="2" height="14"/><path d="M23 692v14l-9.700 -7z"/>
<path d="M45 692.500v13l-10.200 -6.500z"/><rect x="45.800" y="695.500" width="2.500" height="7"/>
<path d="M60.500 691.500v15l12.400 -7.500z"/>
<rect x="84.600" y="695.500" width="2.500" height="7"/><path d="M88 692.500v13l10 -6.500z"/>
<path d="M111.200 692v14l9.800 -7z"/><rect x="121" y="692" width="2" height="14"/>
</g>
<path d="M153.100 715h1153.600" stroke="#c8c8c8" stroke-width="2" fill="none"/>
<path d="M153.9 709.300v5M177.9 709.300v5M201.9 709.300v5M225.9 709.300v5M249.9 709.300v5M273.9 709.300v5M297.9 709.300v5M321.9 709.300v5M345.9 709.300v5M369.9 709.300v5M393.9 709.300v5M417.9 709.300v5M441.9 709.300v5M465.9 709.300v5M489.9 709.300v5M513.9 709.300v5M537.9 709.300v5M561.9 709.300v5M585.9 709.300v5M609.9 709.300v5M633.9 709.300v5M657.9 709.300v5M681.9 709.300v5M705.9 709.300v5M729.9 709.300v5M753.9 709.300v5M777.9 709.300v5M801.9 709.300v5M825.9 709.300v5M849.9 709.300v5M873.9 709.300v5M897.9 709.300v5M921.9 709.300v5M945.9 709.300v5M969.9 709.300v5M993.9 709.300v5M1017.9 709.300v5M1041.9 709.300v5M1065.9 709.300v5M1089.9 709.300v5M1113.9 709.300v5M1137.9 709.300v5M1161.9 709.300v5M1185.9 709.300v5M1209.9 709.300v5M1233.9 709.300v5M1257.9 709.300v5M1281.9 709.300v5M1305.9 709.300v5" stroke="#c8c8c8" stroke-width="1.600" fill="none"/>
<g transform="translate(0.0,0)"><path d="M149.500 691.500h8M147.500 693.500v8M159.500 693.500v4.500M149.500 703.500h5.500" stroke="#444" stroke-width="1.100" fill="none"/><rect x="146" y="690" width="2.500" height="2.500" fill="#0a84f0"/><rect x="158.500" y="690" width="2.500" height="2.500" fill="#0a84f0"/><rect x="146" y="702.500" width="2.500" height="2.500" fill="#0a84f0"/><path d="M154.300 705.600l1 -2.600l1.700 1.700z" fill="#555"/><path d="M155 702.700l4.600 -4.500l2.100 2.100l-4.600 4.500z" fill="#f9b233"/><path d="M159.800 698.600l.9 -.8q1.400 .1 1.600 1.600l-.8 .9z" fill="#f0323c"/></g>
<g transform="translate(0.0,0)"><path d="M170.300 705.500v-10.500l4.800 -4.800h4.400l-4.400 4.800v10.500z" fill="#e0e0e0"/><path d="M174.500 705.500h-4.200v-10.500l4.800 -4.800h3.500" fill="none" stroke="#444" stroke-width="1.100"/><path d="M175.100 695l4.800 -4.800v10.600l-4.800 4.800z" fill="#5bc27d"/><path d="M181 695l5 -4.800v10.600l-5 4.800z" fill="#e59866"/></g>
<g transform="translate(24.0,0)"><path d="M170.300 705.500v-10.500l4.800 -4.800h4.400l-4.400 4.800v10.500z" fill="#e0e0e0"/><path d="M174.500 705.500h-4.200v-10.500l4.800 -4.800h3.500" fill="none" stroke="#444" stroke-width="1.100"/><path d="M175.100 695l4.800 -4.800v10.600l-4.800 4.800z" fill="#5bc27d"/><path d="M181 695l5 -4.800v10.600l-5 4.800z" fill="#e59866"/></g>
<g transform="translate(48.0,0)"><path d="M170.300 705.500v-10.500l4.800 -4.800h4.400l-4.400 4.800v10.500z" fill="#e0e0e0"/><path d="M174.500 705.500h-4.200v-10.500l4.800 -4.800h3.500" fill="none" stroke="#444" stroke-width="1.100"/><path d="M175.100 695l4.800 -4.800v10.600l-4.800 4.800z" fill="#5bc27d"/><path d="M181 695l5 -4.800v10.600l-5 4.800z" fill="#e59866"/></g>
<g transform="translate(72.0,0)"><path d="M170.300 705.500v-10.500l4.800 -4.800h4.400l-4.400 4.800v10.500z" fill="#e0e0e0"/><path d="M174.500 705.500h-4.200v-10.500l4.800 -4.800h3.500" fill="none" stroke="#444" stroke-width="1.100"/><path d="M175.100 695l4.800 -4.800v10.600l-4.800 4.800z" fill="#5bc27d"/><path d="M181 695l5 -4.800v10.600l-5 4.800z" fill="#e59866"/></g>
<g transform="translate(96.0,0)"><path d="M170.300 705.500v-10.500l4.800 -4.800h4.400l-4.400 4.800v10.500z" fill="#e0e0e0"/><path d="M174.500 705.500h-4.200v-10.500l4.800 -4.800h3.500" fill="none" stroke="#444" stroke-width="1.100"/><path d="M175.100 695l4.800 -4.800v10.600l-4.800 4.800z" fill="#5bc27d"/><path d="M181 695l5 -4.800v10.600l-5 4.800z" fill="#e59866"/></g>
<g transform="translate(120.0,0)"><path d="M170.300 705.500v-10.500l4.800 -4.800h4.400l-4.400 4.800v10.500z" fill="#e0e0e0"/><path d="M174.500 705.500h-4.200v-10.500l4.800 -4.800h3.500" fill="none" stroke="#444" stroke-width="1.100"/><path d="M175.100 695l4.800 -4.800v10.600l-4.800 4.800z" fill="#5bc27d"/><path d="M181 695l5 -4.800v10.600l-5 4.800z" fill="#e59866"/></g>
<g transform="translate(144.0,0)"><path d="M170.300 705.500v-10.500l4.800 -4.800h4.400l-4.400 4.800v10.500z" fill="#e0e0e0"/><path d="M174.500 705.500h-4.200v-10.500l4.800 -4.800h3.500" fill="none" stroke="#444" stroke-width="1.100"/><path d="M175.100 695l4.800 -4.800v10.600l-4.800 4.800z" fill="#5bc27d"/><path d="M181 695l5 -4.800v10.600l-5 4.800z" fill="#e59866"/></g>
<g transform="translate(192.0,0)"><path d="M149.500 691.500h8M147.500 693.500v8M159.500 693.500v4.500M149.500 703.500h5.500" stroke="#444" stroke-width="1.100" fill="none"/><rect x="146" y="690" width="2.500" height="2.500" fill="#0a84f0"/><rect x="158.500" y="690" width="2.500" height="2.500" fill="#0a84f0"/><rect x="146" y="702.500" width="2.500" height="2.500" fill="#0a84f0"/><path d="M154.300 705.600l1 -2.600l1.700 1.700z" fill="#555"/><path d="M155 702.700l4.600 -4.500l2.100 2.100l-4.600 4.500z" fill="#f9b233"/><path d="M159.800 698.600l.9 -.8q1.400 .1 1.600 1.600l-.8 .9z" fill="#f0323c"/></g>
<g transform="translate(216.0,0)"><path d="M149.500 691.500h8M147.500 693.500v8M159.500 693.500v4.500M149.500 703.500h5.500" stroke="#444" stroke-width="1.100" fill="none"/><rect x="146" y="690" width="2.500" height="2.500" fill="#0a84f0"/><rect x="158.500" y="690" width="2.500" height="2.500" fill="#0a84f0"/><rect x="146" y="702.500" width="2.500" height="2.500" fill="#0a84f0"/><path d="M154.300 705.600l1 -2.600l1.700 1.700z" fill="#555"/><path d="M155 702.700l4.600 -4.500l2.100 2.100l-4.600 4.500z" fill="#f9b233"/><path d="M159.800 698.600l.9 -.8q1.400 .1 1.600 1.600l-.8 .9z" fill="#f0323c"/></g>
<g transform="translate(240.0,0)"><path d="M149.500 691.500h8M147.500 693.500v8M159.500 693.500v4.500M149.500 703.500h5.500" stroke="#444" stroke-width="1.100" fill="none"/><rect x="146" y="690" width="2.500" height="2.500" fill="#0a84f0"/><rect x="158.500" y="690" width="2.500" height="2.500" fill="#0a84f0"/><rect x="146" y="702.500" width="2.500" height="2.500" fill="#0a84f0"/><path d="M154.300 705.600l1 -2.600l1.700 1.700z" fill="#555"/><path d="M155 702.700l4.600 -4.500l2.100 2.100l-4.600 4.500z" fill="#f9b233"/><path d="M159.800 698.600l.9 -.8q1.400 .1 1.600 1.600l-.8 .9z" fill="#f0323c"/></g>
<g transform="translate(264.0,0)"><path d="M149.500 691.500h8M147.500 693.500v8M159.500 693.500v4.500M149.500 703.500h5.500" stroke="#444" stroke-width="1.100" fill="none"/><rect x="146" y="690" width="2.500" height="2.500" fill="#0a84f0"/><rect x="158.500" y="690" width="2.500" height="2.500" fill="#0a84f0"/><rect x="146" y="702.500" width="2.500" height="2.500" fill="#0a84f0"/><path d="M154.300 705.600l1 -2.600l1.700 1.700z" fill="#555"/><path d="M155 702.700l4.600 -4.500l2.100 2.100l-4.600 4.500z" fill="#f9b233"/><path d="M159.800 698.600l.9 -.8q1.400 .1 1.600 1.600l-.8 .9z" fill="#f0323c"/></g>
<g transform="translate(288.0,0)"><path d="M149.500 691.500h8M147.500 693.500v8M159.500 693.500v4.500M149.500 703.500h5.500" stroke="#444" stroke-width="1.100" fill="none"/><rect x="146" y="690" width="2.500" height="2.500" fill="#0a84f0"/><rect x="158.500" y="690" width="2.500" height="2.500" fill="#0a84f0"/><rect x="146" y="702.500" width="2.500" height="2.500" fill="#0a84f0"/><path d="M154.300 705.600l1 -2.600l1.700 1.700z" fill="#555"/><path d="M155 702.700l4.600 -4.500l2.100 2.100l-4.600 4.500z" fill="#f9b233"/><path d="M159.800 698.600l.9 -.8q1.400 .1 1.600 1.600l-.8 .9z" fill="#f0323c"/></g>
<g transform="translate(312.0,0)"><path d="M149.500 691.500h8M147.500 693.500v8M159.500 693.500v4.500M149.500 703.500h5.500" stroke="#444" stroke-width="1.100" fill="none"/><rect x="146" y="690" width="2.500" height="2.500" fill="#0a84f0"/><rect x="158.500" y="690" width="2.500" height="2.500" fill="#0a84f0"/><rect x="146" y="702.500" width="2.500" height="2.500" fill="#0a84f0"/><path d="M154.300 705.600l1 -2.600l1.700 1.700z" fill="#555"/><path d="M155 702.700l4.600 -4.500l2.100 2.100l-4.600 4.500z" fill="#f9b233"/><path d="M159.800 698.600l.9 -.8q1.400 .1 1.600 1.600l-.8 .9z" fill="#f0323c"/></g>
<g transform="translate(336.0,0)"><path d="M149.500 691.500h8M147.500 693.500v8M159.500 693.500v4.500M149.500 703.500h5.500" stroke="#444" stroke-width="1.100" fill="none"/><rect x="146" y="690" width="2.500" height="2.500" fill="#0a84f0"/><rect x="158.500" y="690" width="2.500" height="2.500" fill="#0a84f0"/><rect x="146" y="702.500" width="2.500" height="2.500" fill="#0a84f0"/><path d="M154.300 705.600l1 -2.600l1.700 1.700z" fill="#555"/><path d="M155 702.700l4.600 -4.500l2.100 2.100l-4.600 4.500z" fill="#f9b233"/><path d="M159.800 698.600l.9 -.8q1.400 .1 1.600 1.600l-.8 .9z" fill="#f0323c"/></g>
<g transform="translate(360.0,0)"><path d="M149.500 691.500h8M147.500 693.500v8M159.500 693.500v4.500M149.500 703.500h5.500" stroke="#444" stroke-width="1.100" fill="none"/><rect x="146" y="690" width="2.500" height="2.500" fill="#0a84f0"/><rect x="158.500" y="690" width="2.500" height="2.500" fill="#0a84f0"/><rect x="146" y="702.500" width="2.500" height="2.500" fill="#0a84f0"/><path d="M154.300 705.600l1 -2.600l1.700 1.700z" fill="#555"/><path d="M155 702.700l4.600 -4.500l2.100 2.100l-4.600 4.500z" fill="#f9b233"/><path d="M159.800 698.600l.9 -.8q1.400 .1 1.600 1.600l-.8 .9z" fill="#f0323c"/></g>
<g transform="translate(360.0,0)"><path d="M170.300 705.500v-10.500l4.800 -4.800h4.400l-4.400 4.800v10.500z" fill="#e0e0e0"/><path d="M174.500 705.500h-4.200v-10.500l4.800 -4.800h3.500" fill="none" stroke="#444" stroke-width="1.100"/><path d="M175.100 695l4.800 -4.800v10.600l-4.800 4.800z" fill="#5bc27d"/><path d="M181 695l5 -4.800v10.600l-5 4.800z" fill="#e59866"/></g>
<g transform="translate(408.0,0)"><path d="M149.500 691.500h8M147.500 693.500v8M159.500 693.500v4.500M149.500 703.500h5.500" stroke="#444" stroke-width="1.100" fill="none"/><rect x="146" y="690" width="2.500" height="2.500" fill="#0a84f0"/><rect x="158.500" y="690" width="2.500" height="2.500" fill="#0a84f0"/><rect x="146" y="702.500" width="2.500" height="2.500" fill="#0a84f0"/><path d="M154.300 705.600l1 -2.600l1.700 1.700z" fill="#555"/><path d="M155 702.700l4.600 -4.500l2.100 2.100l-4.600 4.500z" fill="#f9b233"/><path d="M159.800 698.600l.9 -.8q1.400 .1 1.600 1.600l-.8 .9z" fill="#f0323c"/></g>
<g transform="translate(432.0,0)"><path d="M149.500 691.500h8M147.500 693.500v8M159.500 693.500v4.500M149.500 703.500h5.500" stroke="#444" stroke-width="1.100" fill="none"/><rect x="146" y="690" width="2.500" height="2.500" fill="#0a84f0"/><rect x="158.500" y="690" width="2.500" height="2.500" fill="#0a84f0"/><rect x="146" y="702.500" width="2.500" height="2.500" fill="#0a84f0"/><path d="M154.300 705.600l1 -2.600l1.700 1.700z" fill="#555"/><path d="M155 702.700l4.600 -4.500l2.100 2.100l-4.600 4.500z" fill="#f9b233"/><path d="M159.800 698.600l.9 -.8q1.400 .1 1.600 1.600l-.8 .9z" fill="#f0323c"/></g>
<g transform="translate(0.0,0)"><path d="M602 690.100h16v10.900l-4 2.500h-8l-4 -2.500z" fill="#4b90cc"/><path d="M602 690.100h16l-5.500 8.500h-5z" fill="#8fcaf9"/><path d="M602 690.100l5.500 8.500l-2 4l-3.500 -1.600zM618 690.100l-5.500 8.500l2 4l3.500 -1.600z" fill="#3f86c6"/><circle cx="610" cy="702" r="3.700" fill="#f6f6f6" stroke="#333" stroke-width="1"/></g>
<g opacity=".32">
<g transform="translate(0.0,0)"><path d="M626.800 704.200h5.900v-11.800z" fill="#fff" stroke="#999" stroke-width=".9"/><path d="M634.200 691.900v12.500h6.600z" fill="#8fbfe8"/></g>
<g transform="translate(504.0,0)"><path d="M149.500 691.500h8M147.500 693.500v8M159.500 693.500v4.500M149.500 703.500h5.500" stroke="#444" stroke-width="1.100" fill="none"/><rect x="146" y="690" width="2.500" height="2.500" fill="#0a84f0"/><rect x="158.500" y="690" width="2.500" height="2.500" fill="#0a84f0"/><rect x="146" y="702.500" width="2.500" height="2.500" fill="#0a84f0"/><path d="M154.300 705.600l1 -2.600l1.700 1.700z" fill="#555"/><path d="M155 702.700l4.600 -4.500l2.100 2.100l-4.600 4.500z" fill="#f9b233"/><path d="M159.800 698.600l.9 -.8q1.400 .1 1.600 1.600l-.8 .9z" fill="#f0323c"/></g>
<g transform="translate(528.0,0)"><path d="M149.500 691.500h8M147.500 693.500v8M159.500 693.500v4.500M149.500 703.500h5.500" stroke="#444" stroke-width="1.100" fill="none"/><rect x="146" y="690" width="2.500" height="2.500" fill="#0a84f0"/><rect x="158.500" y="690" width="2.500" height="2.500" fill="#0a84f0"/><rect x="146" y="702.500" width="2.500" height="2.500" fill="#0a84f0"/><path d="M154.300 705.600l1 -2.600l1.700 1.700z" fill="#555"/><path d="M155 702.700l4.600 -4.500l2.100 2.100l-4.600 4.500z" fill="#f9b233"/><path d="M159.800 698.600l.9 -.8q1.400 .1 1.600 1.600l-.8 .9z" fill="#f0323c"/></g>
<g transform="translate(552.0,0)"><path d="M149.500 691.500h8M147.500 693.500v8M159.500 693.500v4.500M149.500 703.500h5.500" stroke="#444" stroke-width="1.100" fill="none"/><rect x="146" y="690" width="2.500" height="2.500" fill="#0a84f0"/><rect x="158.500" y="690" width="2.500" height="2.500" fill="#0a84f0"/><rect x="146" y="702.500" width="2.500" height="2.500" fill="#0a84f0"/><path d="M154.300 705.600l1 -2.600l1.700 1.700z" fill="#555"/><path d="M155 702.700l4.600 -4.500l2.100 2.100l-4.600 4.500z" fill="#f9b233"/><path d="M159.800 698.600l.9 -.8q1.400 .1 1.600 1.600l-.8 .9z" fill="#f0323c"/></g>
<g transform="translate(576.0,0)"><path d="M149.500 691.500h8M147.500 693.500v8M159.500 693.500v4.500M149.500 703.500h5.500" stroke="#444" stroke-width="1.100" fill="none"/><rect x="146" y="690" width="2.500" height="2.500" fill="#0a84f0"/><rect x="158.500" y="690" width="2.500" height="2.500" fill="#0a84f0"/><rect x="146" y="702.500" width="2.500" height="2.500" fill="#0a84f0"/><path d="M154.300 705.600l1 -2.600l1.700 1.700z" fill="#555"/><path d="M155 702.700l4.600 -4.500l2.100 2.100l-4.600 4.500z" fill="#f9b233"/><path d="M159.800 698.600l.9 -.8q1.400 .1 1.600 1.600l-.8 .9z" fill="#f0323c"/></g>
<g transform="translate(600.0,0)"><path d="M149.500 691.500h8M147.500 693.500v8M159.500 693.500v4.500M149.500 703.500h5.500" stroke="#444" stroke-width="1.100" fill="none"/><rect x="146" y="690" width="2.500" height="2.500" fill="#0a84f0"/><rect x="158.500" y="690" width="2.500" height="2.500" fill="#0a84f0"/><rect x="146" y="702.500" width="2.500" height="2.500" fill="#0a84f0"/><path d="M154.300 705.600l1 -2.600l1.700 1.700z" fill="#555"/><path d="M155 702.700l4.600 -4.500l2.100 2.100l-4.600 4.500z" fill="#f9b233"/><path d="M159.800 698.600l.9 -.8q1.400 .1 1.600 1.600l-.8 .9z" fill="#f0323c"/></g>
<g transform="translate(624.0,0)"><path d="M149.500 691.500h8M147.500 693.500v8M159.500 693.500v4.500M149.500 703.500h5.500" stroke="#444" stroke-width="1.100" fill="none"/><rect x="146" y="690" width="2.500" height="2.500" fill="#0a84f0"/><rect x="158.500" y="690" width="2.500" height="2.500" fill="#0a84f0"/><rect x="146" y="702.500" width="2.500" height="2.500" fill="#0a84f0"/><path d="M154.300 705.600l1 -2.600l1.700 1.700z" fill="#555"/><path d="M155 702.700l4.600 -4.500l2.100 2.100l-4.600 4.500z" fill="#f9b233"/><path d="M159.800 698.600l.9 -.8q1.400 .1 1.600 1.600l-.8 .9z" fill="#f0323c"/></g>
<g transform="translate(648.0,0)"><path d="M149.500 691.500h8M147.500 693.500v8M159.500 693.500v4.500M149.500 703.500h5.500" stroke="#444" stroke-width="1.100" fill="none"/><rect x="146" y="690" width="2.500" height="2.500" fill="#0a84f0"/><rect x="158.500" y="690" width="2.500" height="2.500" fill="#0a84f0"/><rect x="146" y="702.500" width="2.500" height="2.500" fill="#0a84f0"/><path d="M154.300 705.600l1 -2.600l1.700 1.700z" fill="#555"/><path d="M155 702.700l4.600 -4.500l2.100 2.100l-4.600 4.500z" fill="#f9b233"/><path d="M159.800 698.600l.9 -.8q1.400 .1 1.600 1.600l-.8 .9z" fill="#f0323c"/></g>
<g transform="translate(672.0,0)"><path d="M149.500 691.500h8M147.500 693.500v8M159.500 693.500v4.500M149.500 703.500h5.500" stroke="#444" stroke-width="1.100" fill="none"/><rect x="146" y="690" width="2.500" height="2.500" fill="#0a84f0"/><rect x="158.500" y="690" width="2.500" height="2.500" fill="#0a84f0"/><rect x="146" y="702.500" width="2.500" height="2.500" fill="#0a84f0"/><path d="M154.300 705.600l1 -2.600l1.700 1.700z" fill="#555"/><path d="M155 702.700l4.600 -4.500l2.100 2.100l-4.600 4.500z" fill="#f9b233"/><path d="M159.800 698.600l.9 -.8q1.400 .1 1.600 1.600l-.8 .9z" fill="#f0323c"/></g>
<g transform="translate(696.0,0)"><path d="M149.500 691.500h8M147.500 693.500v8M159.500 693.500v4.500M149.500 703.500h5.500" stroke="#444" stroke-width="1.100" fill="none"/><rect x="146" y="690" width="2.500" height="2.500" fill="#0a84f0"/><rect x="158.500" y="690" width="2.500" height="2.500" fill="#0a84f0"/><rect x="146" y="702.500" width="2.500" height="2.500" fill="#0a84f0"/><path d="M154.300 705.600l1 -2.600l1.700 1.700z" fill="#555"/><path d="M155 702.700l4.600 -4.500l2.100 2.100l-4.600 4.500z" fill="#f9b233"/><path d="M159.800 698.600l.9 -.8q1.400 .1 1.600 1.600l-.8 .9z" fill="#f0323c"/></g>
<g transform="translate(264.0,0)"><path d="M602 690.100h16v10.900l-4 2.500h-8l-4 -2.500z" fill="#4b90cc"/><path d="M602 690.100h16l-5.500 8.500h-5z" fill="#8fcaf9"/><path d="M602 690.100l5.500 8.500l-2 4l-3.500 -1.600zM618 690.100l-5.500 8.500l2 4l3.500 -1.600z" fill="#3f86c6"/><circle cx="610" cy="702" r="3.700" fill="#f6f6f6" stroke="#333" stroke-width="1"/></g>
<g transform="translate(264.0,0)"><path d="M626.800 704.200h5.900v-11.800z" fill="#fff" stroke="#999" stroke-width=".9"/><path d="M634.200 691.900v12.500h6.600z" fill="#8fbfe8"/></g>
<g transform="translate(768.0,0)"><path d="M149.500 691.500h8M147.500 693.500v8M159.500 693.500v4.500M149.500 703.500h5.500" stroke="#444" stroke-width="1.100" fill="none"/><rect x="146" y="690" width="2.500" height="2.500" fill="#0a84f0"/><rect x="158.500" y="690" width="2.500" height="2.500" fill="#0a84f0"/><rect x="146" y="702.500" width="2.500" height="2.500" fill="#0a84f0"/><path d="M154.300 705.600l1 -2.600l1.700 1.700z" fill="#555"/><path d="M155 702.700l4.600 -4.500l2.100 2.100l-4.600 4.500z" fill="#f9b233"/><path d="M159.800 698.600l.9 -.8q1.400 .1 1.600 1.600l-.8 .9z" fill="#f0323c"/></g>
<g transform="translate(792.0,0)"><path d="M149.500 691.500h8M147.500 693.500v8M159.500 693.500v4.500M149.500 703.500h5.500" stroke="#444" stroke-width="1.100" fill="none"/><rect x="146" y="690" width="2.500" height="2.500" fill="#0a84f0"/><rect x="158.500" y="690" width="2.500" height="2.500" fill="#0a84f0"/><rect x="146" y="702.500" width="2.500" height="2.500" fill="#0a84f0"/><path d="M154.300 705.600l1 -2.600l1.700 1.700z" fill="#555"/><path d="M155 702.700l4.600 -4.500l2.100 2.100l-4.600 4.500z" fill="#f9b233"/><path d="M159.800 698.600l.9 -.8q1.400 .1 1.600 1.600l-.8 .9z" fill="#f0323c"/></g>
<g transform="translate(816.0,0)"><path d="M149.500 691.500h8M147.500 693.500v8M159.500 693.500v4.500M149.500 703.500h5.500" stroke="#444" stroke-width="1.100" fill="none"/><rect x="146" y="690" width="2.500" height="2.500" fill="#0a84f0"/><rect x="158.500" y="690" width="2.500" height="2.500" fill="#0a84f0"/><rect x="146" y="702.500" width="2.500" height="2.500" fill="#0a84f0"/><path d="M154.300 705.600l1 -2.600l1.700 1.700z" fill="#555"/><path d="M155 702.700l4.600 -4.500l2.100 2.100l-4.600 4.500z" fill="#f9b233"/><path d="M159.800 698.600l.9 -.8q1.400 .1 1.600 1.600l-.8 .9z" fill="#f0323c"/></g>
<g transform="translate(840.0,0)"><path d="M149.500 691.500h8M147.500 693.500v8M159.500 693.500v4.500M149.500 703.500h5.500" stroke="#444" stroke-width="1.100" fill="none"/><rect x="146" y="690" width="2.500" height="2.500" fill="#0a84f0"/><rect x="158.500" y="690" width="2.500" height="2.500" fill="#0a84f0"/><rect x="146" y="702.500" width="2.500" height="2.500" fill="#0a84f0"/><path d="M154.300 705.600l1 -2.600l1.700 1.700z" fill="#555"/><path d="M155 702.700l4.600 -4.500l2.100 2.100l-4.600 4.500z" fill="#f9b233"/><path d="M159.800 698.600l.9 -.8q1.400 .1 1.600 1.600l-.8 .9z" fill="#f0323c"/></g>
<g transform="translate(864.0,0)"><path d="M149.500 691.500h8M147.500 693.500v8M159.500 693.500v4.500M149.500 703.500h5.500" stroke="#444" stroke-width="1.100" fill="none"/><rect x="146" y="690" width="2.500" height="2.500" fill="#0a84f0"/><rect x="158.500" y="690" width="2.500" height="2.500" fill="#0a84f0"/><rect x="146" y="702.500" width="2.500" height="2.500" fill="#0a84f0"/><path d="M154.300 705.600l1 -2.600l1.700 1.700z" fill="#555"/><path d="M155 702.700l4.600 -4.500l2.100 2.100l-4.600 4.500z" fill="#f9b233"/><path d="M159.800 698.600l.9 -.8q1.400 .1 1.600 1.600l-.8 .9z" fill="#f0323c"/></g>
<g transform="translate(888.0,0)"><path d="M149.500 691.500h8M147.500 693.500v8M159.500 693.500v4.500M149.500 703.500h5.500" stroke="#444" stroke-width="1.100" fill="none"/><rect x="146" y="690" width="2.500" height="2.500" fill="#0a84f0"/><rect x="158.500" y="690" width="2.500" height="2.500" fill="#0a84f0"/><rect x="146" y="702.500" width="2.500" height="2.500" fill="#0a84f0"/><path d="M154.300 705.600l1 -2.600l1.700 1.700z" fill="#555"/><path d="M155 702.700l4.600 -4.500l2.100 2.100l-4.600 4.500z" fill="#f9b233"/><path d="M159.800 698.600l.9 -.8q1.400 .1 1.600 1.600l-.8 .9z" fill="#f0323c"/></g>
<g transform="translate(912.0,0)"><path d="M149.500 691.500h8M147.500 693.500v8M159.500 693.500v4.500M149.500 703.500h5.500" stroke="#444" stroke-width="1.100" fill="none"/><rect x="146" y="690" width="2.500" height="2.500" fill="#0a84f0"/><rect x="158.500" y="690" width="2.500" height="2.500" fill="#0a84f0"/><rect x="146" y="702.500" width="2.500" height="2.500" fill="#0a84f0"/><path d="M154.300 705.600l1 -2.600l1.700 1.700z" fill="#555"/><path d="M155 702.700l4.600 -4.500l2.100 2.100l-4.600 4.500z" fill="#f9b233"/><path d="M159.800 698.600l.9 -.8q1.400 .1 1.600 1.600l-.8 .9z" fill="#f0323c"/></g>
<g transform="translate(936.0,0)"><path d="M149.500 691.500h8M147.500 693.500v8M159.500 693.500v4.500M149.500 703.500h5.500" stroke="#444" stroke-width="1.100" fill="none"/><rect x="146" y="690" width="2.500" height="2.500" fill="#0a84f0"/><rect x="158.500" y="690" width="2.500" height="2.500" fill="#0a84f0"/><rect x="146" y="702.500" width="2.500" height="2.500" fill="#0a84f0"/><path d="M154.300 705.600l1 -2.600l1.700 1.700z" fill="#555"/><path d="M155 702.700l4.600 -4.500l2.100 2.100l-4.600 4.500z" fill="#f9b233"/><path d="M159.800 698.600l.9 -.8q1.400 .1 1.600 1.600l-.8 .9z" fill="#f0323c"/></g>
<g transform="translate(960.0,0)"><path d="M149.500 691.500h8M147.500 693.500v8M159.500 693.500v4.500M149.500 703.500h5.500" stroke="#444" stroke-width="1.100" fill="none"/><rect x="146" y="690" width="2.500" height="2.500" fill="#0a84f0"/><rect x="158.500" y="690" width="2.500" height="2.500" fill="#0a84f0"/><rect x="146" y="702.500" width="2.500" height="2.500" fill="#0a84f0"/><path d="M154.300 705.600l1 -2.600l1.700 1.700z" fill="#555"/><path d="M155 702.700l4.600 -4.500l2.100 2.100l-4.600 4.500z" fill="#f9b233"/><path d="M159.800 698.600l.9 -.8q1.400 .1 1.600 1.600l-.8 .9z" fill="#f0323c"/></g>
<g transform="translate(528.0,0)"><path d="M602 690.100h16v10.900l-4 2.500h-8l-4 -2.500z" fill="#4b90cc"/><path d="M602 690.100h16l-5.500 8.500h-5z" fill="#8fcaf9"/><path d="M602 690.100l5.500 8.500l-2 4l-3.500 -1.600zM618 690.100l-5.500 8.500l2 4l3.500 -1.600z" fill="#3f86c6"/><circle cx="610" cy="702" r="3.700" fill="#f6f6f6" stroke="#333" stroke-width="1"/></g>
<g transform="translate(528.0,0)"><path d="M626.800 704.200h5.900v-11.800z" fill="#fff" stroke="#999" stroke-width=".9"/><path d="M634.200 691.900v12.500h6.600z" fill="#8fbfe8"/></g>
<g transform="translate(1186.0,698)"><path d="M0 -5v10M-5 0h10" stroke="#444" stroke-width="1.300"/><path d="M0 -8l2.600 3.600h-5.200zM0 8l2.600 -3.600h-5.200zM-8 0l3.600 -2.600v5.200zM8 0l-3.600 -2.600v5.200z" fill="#444"/></g>
<g transform="translate(1056.0,0)"><path d="M149.500 691.500h8M147.500 693.500v8M159.500 693.500v4.500M149.500 703.500h5.500" stroke="#444" stroke-width="1.100" fill="none"/><rect x="146" y="690" width="2.500" height="2.500" fill="#0a84f0"/><rect x="158.500" y="690" width="2.500" height="2.500" fill="#0a84f0"/><rect x="146" y="702.500" width="2.500" height="2.500" fill="#0a84f0"/><path d="M154.300 705.600l1 -2.600l1.700 1.700z" fill="#555"/><path d="M155 702.700l4.600 -4.500l2.100 2.100l-4.600 4.500z" fill="#f9b233"/><path d="M159.800 698.600l.9 -.8q1.400 .1 1.600 1.600l-.8 .9z" fill="#f0323c"/></g>
<g transform="translate(1234.0,698)"><path d="M0 -5v10M-5 0h10" stroke="#444" stroke-width="1.300"/><path d="M0 -8l2.600 3.600h-5.200zM0 8l2.600 -3.600h-5.200zM-8 0l3.600 -2.600v5.200zM8 0l-3.600 -2.600v5.200z" fill="#444"/></g>
<g transform="translate(1104.0,0)"><path d="M149.500 691.500h8M147.500 693.500v8M159.500 693.500v4.500M149.500 703.500h5.500" stroke="#444" stroke-width="1.100" fill="none"/><rect x="146" y="690" width="2.500" height="2.500" fill="#0a84f0"/><rect x="158.500" y="690" width="2.500" height="2.500" fill="#0a84f0"/><rect x="146" y="702.500" width="2.500" height="2.500" fill="#0a84f0"/><path d="M154.300 705.600l1 -2.600l1.700 1.700z" fill="#555"/><path d="M155 702.700l4.600 -4.500l2.100 2.100l-4.600 4.500z" fill="#f9b233"/><path d="M159.800 698.600l.9 -.8q1.400 .1 1.600 1.600l-.8 .9z" fill="#f0323c"/></g>
<g transform="translate(1128.0,0)"><path d="M149.500 691.500h8M147.500 693.500v8M159.500 693.500v4.500M149.500 703.500h5.500" stroke="#444" stroke-width="1.100" fill="none"/><rect x="146" y="690" width="2.500" height="2.500" fill="#0a84f0"/><rect x="158.500" y="690" width="2.500" height="2.500" fill="#0a84f0"/><rect x="146" y="702.500" width="2.500" height="2.500" fill="#0a84f0"/><path d="M154.300 705.600l1 -2.600l1.700 1.700z" fill="#555"/><path d="M155 702.700l4.600 -4.500l2.100 2.100l-4.600 4.500z" fill="#f9b233"/><path d="M159.800 698.600l.9 -.8q1.400 .1 1.600 1.600l-.8 .9z" fill="#f0323c"/></g>
<g transform="translate(0.0,0)"><path d="M1299 693h9v10h-9z" fill="#6aade4"/><path d="M1299 693l3 -3h9l-3 3z" fill="#8fcaf9"/><path d="M1308 693l3 -3v10l-3 3z" fill="#4b90cc"/><path d="M1299 703h9l3 -3v2l-3 3.500h-9z" fill="#aaa"/><path d="M1313.500 704v-11" stroke="#333" stroke-width="1"/><path d="M1313.500 690l1.800 3.500h-3.600z" fill="#333"/></g>
</g>
<path d="M602.300 685.300l4 -3.800M607.400 685.300l4 -3.800M612.600 685.300l4 -3.800" stroke="#444" stroke-width="1.400" stroke-linecap="round"/>
<path d="M616.100 684.200h11.800v3l-4.400 5.400v23.100h-2.300v-23.100l-5.100 -5.400z" fill="#666"/>
<path d="M1352.86 698.18L1352.86 699.82L1350.53 700.83L1350.06 701.97L1350.99 704.33L1349.83 705.49L1347.47 704.56L1346.33 705.03L1345.32 707.36L1343.68 707.36L1342.67 705.03L1341.53 704.56L1339.17 705.49L1338.01 704.33L1338.94 701.97L1338.47 700.83L1336.14 699.82L1336.14 698.18L1338.47 697.17L1338.94 696.03L1338.01 693.67L1339.17 692.51L1341.53 693.44L1342.67 692.97L1343.68 690.64L1345.32 690.64L1346.33 692.97L1347.47 693.44L1349.83 692.51L1350.99 693.67L1350.06 696.03L1350.53 697.17Z" fill="#8c8c8c"/><circle cx="1344.500" cy="699" r="3.400" fill="#f1f1f1"/>
</svg>
<div id="taskbar"></div>
<div class="abs" style="left:48px;top:728px;width:344px;height:40px;background:#333;border-right:1.2px solid #5a5a5a;border-left:1.2px solid #565656;border-top:1px solid #2b2b2b"></div>
<div class="abs" style="left:835px;top:728px;width:48px;height:40px;background:#5e5e5e"></div>
<span class="t" style="left:88.0px;top:738.30px;font-size:15px;line-height:21px;letter-spacing:-0.267px;color:#e4e4e4;">Type here to search</span>
<span class="t" style="left:1055.5px;top:737.60px;font-size:15px;line-height:21px;letter-spacing:-1.279px;color:#f0f0f0;">24°C</span>
<span class="t" style="left:1093.0px;top:737.60px;font-size:15px;line-height:21px;letter-spacing:-1.051px;color:#f0f0f0;">Cerah</span>
<span class="t" style="left:1266.6px;top:731.54px;font-size:12px;line-height:17px;letter-spacing:-0.489px;color:#f4f4f4;">4:30</span>
<span class="t" style="left:1250.0px;top:749.54px;font-size:12px;line-height:17px;letter-spacing:-0.326px;color:#f4f4f4;">10/12/2022</span>
<svg width="1366" height="40" viewBox="0 728 1366 40" style="left:0;top:728px">
<!-- start -->
<path d="M15.800 742.200l7 -1v6.700h-7zM23.800 741.100l8.500 -1.300v8.100h-8.500zM15.800 748.900h7v6.700l-7 -1zM23.800 748.900h8.500v8l-8.500 -1.200z" fill="#fff"/>
<!-- search glass -->
<circle cx="70" cy="745.800" r="5" fill="none" stroke="#e8e8e8" stroke-width="1.400"/><path d="M66.500 749.500l-6 6.300" stroke="#e8e8e8" stroke-width="1.500"/>
<!-- task view -->
<g fill="none" stroke="#fff" stroke-width="1.200"><rect x="408.600" y="744.800" width="9.800" height="5.400"/><path d="M408.600 740v2.600h9.800v-2.600M408.600 755.200v-2.600h9.800v2.600M422.500 740v2.800M422.500 748.200v7"/></g><rect x="421.200" y="744.200" width="2.700" height="2.700" fill="#fff"/>
<!-- chrome -->
<defs><g id="chrome"><circle r="11.900" fill="#e33b2e"/><path d="M-10.300 -5.950a11.900 11.900 0 0 0 10.300 17.850l5.150 -8.900h-10.300z" fill="#1fa463" transform=""/><path d="M0 11.900a11.900 11.900 0 0 0 10.300 -17.850h-10.300l5.150 8.900z" fill="#fcc934"/><path d="M-10.300 -5.950l5.150 8.900a5.950 5.950 0 0 1 5.150 -8.900h10.300a11.900 11.900 0 0 0 -20.600 0z" fill="#e33b2e"/><circle r="5.500" fill="#fff"/><circle r="4.300" fill="#4285f4"/></g></defs>
<use href="#chrome" x="467.100" y="747.800"/>
<!-- MP -->
<rect x="504" y="736.200" width="23.500" height="23.300" fill="#1d1d1d"/>
<text x="505" y="752.500" font-family="Liberation Sans, sans-serif" font-size="11" fill="#f2f2f2" textLength="17" lengthAdjust="spacingAndGlyphs">MP</text>
<path d="M517 739l3 4.500l5.500 -1l-4 4l2.500 9.500l-3.500 -7.500l-3 1l1.500 -4z" fill="#6db33f"/>
<!-- explorer -->
<path d="M553.800 741q0 -2 1.500 -2h6l1.500 2h11.500q1.500 0 1.500 1.500v13q0 1.400 -1.500 1.400h-19q-1.500 0 -1.500 -1.400z" fill="#f6c443"/>
<path d="M553.800 739h8.200l1.200 2h-9.400z" fill="#e0a526"/>
<path d="M553.800 743.500h22v12q0 1.400 -1.500 1.400h-19q-1.500 0 -1.500 -1.400z" fill="#fbd96b"/>
<path d="M558.500 756.900v-7.400q0 -1 1 -1h10.600q1 0 1 1v7.400h-3.600v-4.700h-5.400v4.700z" fill="#2e8fe6"/>
<!-- mendeley -->
<rect x="602" y="735.900" width="23.800" height="23.600" fill="#a5122c"/>
<g fill="#fff"><circle cx="609.500" cy="744.500" r="2.700"/><circle cx="618.300" cy="744.500" r="2.700"/><circle cx="613.900" cy="750" r="2.200"/><circle cx="606.300" cy="751.800" r="2.300"/><circle cx="621.500" cy="751.800" r="2.300"/><path d="M606 751l3 -6.500h9.500l3 6.500l-2 1l-3 -5l-2.600 3.500l-2.600 -3.500l-3 5z"/></g>
<!-- blank file -->
<path d="M655 737.500h11.200l4 4v16.700h-15.200z" fill="#f7f7f7"/><path d="M666.200 737.500v4h4z" fill="#cfcfcf"/>
<!-- chrome 2 -->
<use href="#chrome" x="712.100" y="747.800"/>
<circle cx="718.300" cy="754.500" r="7.300" fill="#3a2a22"/><ellipse cx="718.300" cy="755.500" rx="4.700" ry="5.200" fill="#e9c9ae"/><path d="M711.500 753q1 -6.500 7 -6.300q6 .2 6.800 6.300q-3 -3.500 -6.800 -2.500q-4 -1 -7 2.500z" fill="#2a1c16"/>
<!-- word -->
<rect x="755.500" y="737.200" width="17.300" height="21" rx="1" fill="#2b7cd3"/><rect x="755.500" y="737.200" width="17.300" height="5.300" fill="#41a5ee"/><rect x="755.500" y="747.800" width="17.300" height="5.300" fill="#185abd"/><rect x="755.500" y="753" width="17.300" height="5.200" fill="#103f91"/>
<rect x="749" y="742.600" width="12" height="11" rx="1" fill="#185abd"/>
<text x="755" y="751.800" font-family="Liberation Sans, sans-serif" font-weight="bold" font-size="9.500" fill="#fff" text-anchor="middle">W</text>
<!-- pdf -->
<rect x="798.100" y="735.900" width="23.800" height="23.600" fill="#e9481c"/>
<path d="M808.500 740.500q-4.500 6 -5 13.500l5.500 3.500q-1.500 -7 1.500 -11.500zM811.500 739.500l5.500 1.500q3.500 6 1 13l-6 3q4 -7 -.5 -17.500z" fill="#fff"/>
<!-- fusion -->
<path d="M848.300 738.200l3 -2h14.700q2 0 2 2v19.300q0 2 -2 2h-15.700l-2 -2z" fill="#f37021"/>
<path d="M848.300 738.200l2.300 1.500v19.800l-2.300 -2z" fill="#c2530f"/>
<path d="M850.600 752.700h17.400v4.800q0 2 -2 2h-15.400z" fill="#8f3d12"/>
<text x="859.500" y="750.300" font-family="Liberation Sans, sans-serif" font-weight="bold" font-size="13" fill="#fff" text-anchor="middle">F</text>
<text x="859.300" y="758.400" font-family="Liberation Sans, sans-serif" font-weight="bold" font-size="5.500" fill="#f4d9c8" text-anchor="middle">360</text>
<!-- running indicators -->
<g fill="#76b9ed"><rect x="692" y="766.400" width="40" height="1.600"/><rect x="740.800" y="766.400" width="31.400" height="1.600"/><rect x="772.800" y="766.400" width="8" height="1.600" fill="#5a93c4"/><rect x="789.900" y="766.400" width="40.100" height="1.600"/><rect x="835" y="766.400" width="48" height="1.600"/></g>
<!-- weather -->
<defs><linearGradient id="moong" x1="0" y1="0" x2="0" y2="1"><stop offset="0" stop-color="#fdc11c"/><stop offset="1" stop-color="#ef6f1b"/></linearGradient>
<linearGradient id="cloudg" x1="0" y1="0" x2="0" y2="1"><stop offset="0" stop-color="#f4f8ff"/><stop offset="1" stop-color="#8fb4e6"/></linearGradient></defs>
<mask id="moonm" maskUnits="userSpaceOnUse" x="1020" y="730" width="40" height="36"><rect x="1020" y="730" width="40" height="36" fill="#fff"/><circle cx="1031.800" cy="743.300" r="7.300" fill="#000"/></mask><circle cx="1036.400" cy="747.700" r="9.700" fill="url(#moong)" mask="url(#moonm)"/>
<path d="M1025 745.200q-2.300 -.2 -2.300 -2.200q.1 -2 2.500 -2.100q.8 -3.200 4.300 -3.200q3.200 .1 4 2.900q2.800 .1 2.900 2.400q-.1 2.200 -2.600 2.200z" fill="url(#cloudg)"/>
<!-- tray -->
<path d="M1153.200 750.800l5.900 -5.800l5.900 5.800" fill="none" stroke="#fff" stroke-width="1.400"/>
<g fill="none" stroke="#fff" stroke-width="1.200"><rect x="1180" y="745" width="10" height="6.800"/><path d="M1190.500 747v3"/></g>
<rect x="1181.500" y="746.500" width="7" height="3.800" fill="#fff"/>
<path d="M1176 743v2.500M1178.500 743v2.500M1175.300 745.500h4v2q-.3 1.800 -2 1.900q-1.700 -.1 -2 -1.900zM1177.300 749.500v2h3" fill="none" stroke="#fff" stroke-width="1"/>
<g fill="none" stroke="#fff" stroke-width="1.300"><path d="M1203 754a10.500 10.500 0 0 1 10.500 -10.500"/><path d="M1206.500 754a7 7 0 0 1 7 -7"/><path d="M1210 754a3.500 3.500 0 0 1 3.500 -3.500" /></g><circle cx="1212.700" cy="753.300" r="1.200" fill="#fff"/>
<g fill="none" stroke="#fff" stroke-width="1.200"><rect x="1227" y="745.300" width="7" height="6.200" rx="1"/><path d="M1234 747.500l2.700 -1.500v5l-2.700 -1.500"/><path d="M1227.500 743.200q1 -2 3.500 -2t3.500 2M1227.500 753.500q1 2 3.500 2t3.500 -2"/></g>
<!-- notifications -->
<path d="M1325.500 740h15.500v11h-11l-2.500 2.500v-2.500h-2z" fill="#fff"/>
<path d="M1328 743h10.500M1328 745.500h10.500M1328 748h10.500" stroke="#22211c" stroke-width=".9"/>
<circle cx="1340.300" cy="754.800" r="8" fill="#22211c" stroke="#d8d8d8" stroke-width="1"/>
<text x="1340.300" y="758.800" font-family="Liberation Sans, sans-serif" font-size="11" fill="#fff" text-anchor="middle" textLength="11" lengthAdjust="spacingAndGlyphs">12</text>
<!-- show desktop --><path d="M1361.500 728v40" stroke="#555" stroke-width="1"/>

</svg>
</div>
</body></html>
